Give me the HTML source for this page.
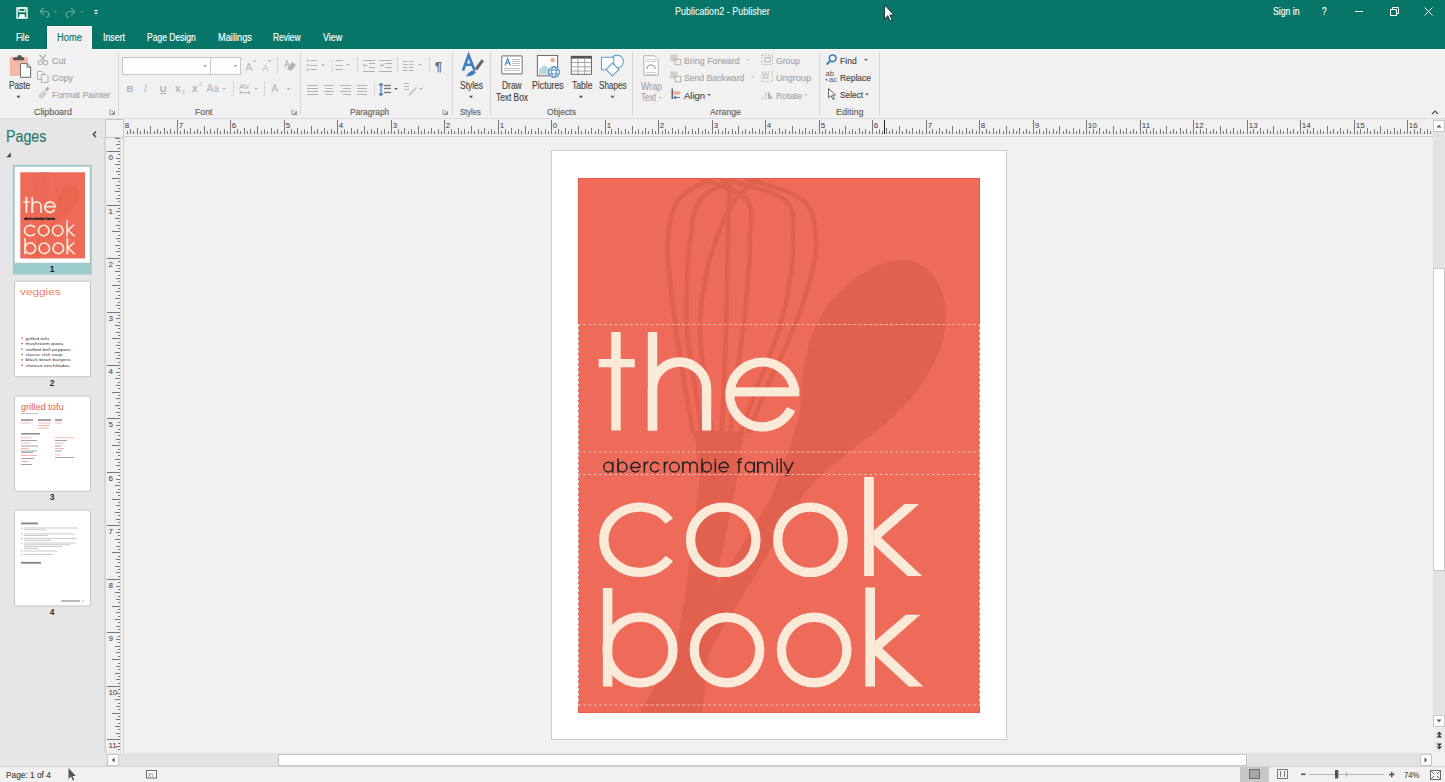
<!DOCTYPE html><html><head><meta charset="utf-8"><style>
html,body{margin:0;padding:0;}
body{width:1445px;height:782px;overflow:hidden;position:relative;background:#f0f0f0;font-family:"Liberation Sans",sans-serif;}
.t{position:absolute;white-space:nowrap;transform-origin:0 0;-webkit-text-stroke:0.15px currentColor;}
svg{position:absolute;overflow:visible;}
</style></head><body>
<div style="position:absolute;left:0px;top:0px;width:1445px;height:49px;background:#077568;"></div>
<div style="position:absolute;left:0px;top:49px;width:1445px;height:70px;background:#f1f1f1;"></div>
<div style="position:absolute;left:0px;top:49px;width:1445px;height:1px;background:#fff;"></div>
<div style="position:absolute;left:46px;top:25px;width:47px;height:24px;background:#066a5e;"></div>
<div style="position:absolute;left:47px;top:26px;width:45px;height:24px;background:#ffffff;"></div>
<div style="position:absolute;left:48px;top:27px;width:43px;height:23px;background:#f1f1f1;"></div>
<div style="position:absolute;left:0px;top:118px;width:1445px;height:1px;background:#d8dbe0;"></div>
<div style="position:absolute;left:0px;top:119px;width:105px;height:647px;background:#e6e6e6;"></div>
<div style="position:absolute;left:105px;top:119px;width:1328px;height:18px;background:#f0f0f0;"></div>
<div style="position:absolute;left:105px;top:137px;width:18px;height:616px;background:#f0f0f0;"></div>
<div style="position:absolute;left:123px;top:137px;width:1310px;height:616px;background:#f0f0f0;"></div>
<div style="position:absolute;left:1433px;top:119px;width:12px;height:647px;background:#e3e3e3;"></div>
<div style="position:absolute;left:105px;top:753px;width:1328px;height:13px;background:#e3e3e3;"></div>
<div style="position:absolute;left:0px;top:766px;width:1445px;height:16px;background:#f1f1f1;"></div>
<div style="position:absolute;left:0px;top:766px;width:1445px;height:1px;background:#d4d4d4;"></div>
<svg style="left:0px;top:0px;shape-rendering:crispEdges;" width="1445" height="782" viewBox="0 0 1445 782"><rect x="105.5" y="119.5" width="18" height="18" fill="#f1f1f1" stroke="#c6c6c6"/><line x1="123" y1="136.5" x2="1433" y2="136.5" stroke="#cdcdcd"/><line x1="123" y1="133.5" x2="1433" y2="133.5" stroke="#dedede"/><text x="124.8" y="127.9" font-size="8" fill="#3a3a3a" font-family="Liberation Sans">8</text><line x1="127.5" y1="131" x2="127.5" y2="133.5" stroke="#787878"/><line x1="130.5" y1="129" x2="130.5" y2="133.5" stroke="#787878"/><line x1="133.5" y1="131" x2="133.5" y2="133.5" stroke="#787878"/><line x1="137.5" y1="128" x2="137.5" y2="133.5" stroke="#787878"/><line x1="140.5" y1="131" x2="140.5" y2="133.5" stroke="#787878"/><line x1="144.5" y1="129" x2="144.5" y2="133.5" stroke="#787878"/><line x1="147.5" y1="131" x2="147.5" y2="133.5" stroke="#787878"/><line x1="150.5" y1="126" x2="150.5" y2="133.5" stroke="#787878"/><line x1="154.5" y1="131" x2="154.5" y2="133.5" stroke="#787878"/><line x1="157.5" y1="129" x2="157.5" y2="133.5" stroke="#787878"/><line x1="160.5" y1="131" x2="160.5" y2="133.5" stroke="#787878"/><line x1="164.5" y1="128" x2="164.5" y2="133.5" stroke="#787878"/><line x1="167.5" y1="131" x2="167.5" y2="133.5" stroke="#787878"/><line x1="170.5" y1="129" x2="170.5" y2="133.5" stroke="#787878"/><line x1="174.5" y1="131" x2="174.5" y2="133.5" stroke="#787878"/><line x1="177.5" y1="120" x2="177.5" y2="133.5" stroke="#787878"/><text x="178.8" y="127.9" font-size="8" fill="#3a3a3a" font-family="Liberation Sans">7</text><line x1="180.5" y1="131" x2="180.5" y2="133.5" stroke="#787878"/><line x1="184.5" y1="129" x2="184.5" y2="133.5" stroke="#787878"/><line x1="187.5" y1="131" x2="187.5" y2="133.5" stroke="#787878"/><line x1="190.5" y1="128" x2="190.5" y2="133.5" stroke="#787878"/><line x1="194.5" y1="131" x2="194.5" y2="133.5" stroke="#787878"/><line x1="197.5" y1="129" x2="197.5" y2="133.5" stroke="#787878"/><line x1="200.5" y1="131" x2="200.5" y2="133.5" stroke="#787878"/><line x1="204.5" y1="126" x2="204.5" y2="133.5" stroke="#787878"/><line x1="207.5" y1="131" x2="207.5" y2="133.5" stroke="#787878"/><line x1="210.5" y1="129" x2="210.5" y2="133.5" stroke="#787878"/><line x1="214.5" y1="131" x2="214.5" y2="133.5" stroke="#787878"/><line x1="217.5" y1="128" x2="217.5" y2="133.5" stroke="#787878"/><line x1="220.5" y1="131" x2="220.5" y2="133.5" stroke="#787878"/><line x1="224.5" y1="129" x2="224.5" y2="133.5" stroke="#787878"/><line x1="227.5" y1="131" x2="227.5" y2="133.5" stroke="#787878"/><line x1="230.5" y1="120" x2="230.5" y2="133.5" stroke="#787878"/><text x="231.8" y="127.9" font-size="8" fill="#3a3a3a" font-family="Liberation Sans">6</text><line x1="234.5" y1="131" x2="234.5" y2="133.5" stroke="#787878"/><line x1="237.5" y1="129" x2="237.5" y2="133.5" stroke="#787878"/><line x1="240.5" y1="131" x2="240.5" y2="133.5" stroke="#787878"/><line x1="244.5" y1="128" x2="244.5" y2="133.5" stroke="#787878"/><line x1="247.5" y1="131" x2="247.5" y2="133.5" stroke="#787878"/><line x1="250.5" y1="129" x2="250.5" y2="133.5" stroke="#787878"/><line x1="254.5" y1="131" x2="254.5" y2="133.5" stroke="#787878"/><line x1="257.5" y1="126" x2="257.5" y2="133.5" stroke="#787878"/><line x1="261.5" y1="131" x2="261.5" y2="133.5" stroke="#787878"/><line x1="264.5" y1="129" x2="264.5" y2="133.5" stroke="#787878"/><line x1="267.5" y1="131" x2="267.5" y2="133.5" stroke="#787878"/><line x1="271.5" y1="128" x2="271.5" y2="133.5" stroke="#787878"/><line x1="274.5" y1="131" x2="274.5" y2="133.5" stroke="#787878"/><line x1="277.5" y1="129" x2="277.5" y2="133.5" stroke="#787878"/><line x1="281.5" y1="131" x2="281.5" y2="133.5" stroke="#787878"/><line x1="284.5" y1="120" x2="284.5" y2="133.5" stroke="#787878"/><text x="285.8" y="127.9" font-size="8" fill="#3a3a3a" font-family="Liberation Sans">5</text><line x1="287.5" y1="131" x2="287.5" y2="133.5" stroke="#787878"/><line x1="291.5" y1="129" x2="291.5" y2="133.5" stroke="#787878"/><line x1="294.5" y1="131" x2="294.5" y2="133.5" stroke="#787878"/><line x1="297.5" y1="128" x2="297.5" y2="133.5" stroke="#787878"/><line x1="301.5" y1="131" x2="301.5" y2="133.5" stroke="#787878"/><line x1="304.5" y1="129" x2="304.5" y2="133.5" stroke="#787878"/><line x1="307.5" y1="131" x2="307.5" y2="133.5" stroke="#787878"/><line x1="311.5" y1="126" x2="311.5" y2="133.5" stroke="#787878"/><line x1="314.5" y1="131" x2="314.5" y2="133.5" stroke="#787878"/><line x1="317.5" y1="129" x2="317.5" y2="133.5" stroke="#787878"/><line x1="321.5" y1="131" x2="321.5" y2="133.5" stroke="#787878"/><line x1="324.5" y1="128" x2="324.5" y2="133.5" stroke="#787878"/><line x1="327.5" y1="131" x2="327.5" y2="133.5" stroke="#787878"/><line x1="331.5" y1="129" x2="331.5" y2="133.5" stroke="#787878"/><line x1="334.5" y1="131" x2="334.5" y2="133.5" stroke="#787878"/><line x1="337.5" y1="120" x2="337.5" y2="133.5" stroke="#787878"/><text x="338.8" y="127.9" font-size="8" fill="#3a3a3a" font-family="Liberation Sans">4</text><line x1="341.5" y1="131" x2="341.5" y2="133.5" stroke="#787878"/><line x1="344.5" y1="129" x2="344.5" y2="133.5" stroke="#787878"/><line x1="347.5" y1="131" x2="347.5" y2="133.5" stroke="#787878"/><line x1="351.5" y1="128" x2="351.5" y2="133.5" stroke="#787878"/><line x1="354.5" y1="131" x2="354.5" y2="133.5" stroke="#787878"/><line x1="357.5" y1="129" x2="357.5" y2="133.5" stroke="#787878"/><line x1="361.5" y1="131" x2="361.5" y2="133.5" stroke="#787878"/><line x1="364.5" y1="126" x2="364.5" y2="133.5" stroke="#787878"/><line x1="367.5" y1="131" x2="367.5" y2="133.5" stroke="#787878"/><line x1="371.5" y1="129" x2="371.5" y2="133.5" stroke="#787878"/><line x1="374.5" y1="131" x2="374.5" y2="133.5" stroke="#787878"/><line x1="377.5" y1="128" x2="377.5" y2="133.5" stroke="#787878"/><line x1="381.5" y1="131" x2="381.5" y2="133.5" stroke="#787878"/><line x1="384.5" y1="129" x2="384.5" y2="133.5" stroke="#787878"/><line x1="388.5" y1="131" x2="388.5" y2="133.5" stroke="#787878"/><line x1="391.5" y1="120" x2="391.5" y2="133.5" stroke="#787878"/><text x="392.8" y="127.9" font-size="8" fill="#3a3a3a" font-family="Liberation Sans">3</text><line x1="394.5" y1="131" x2="394.5" y2="133.5" stroke="#787878"/><line x1="398.5" y1="129" x2="398.5" y2="133.5" stroke="#787878"/><line x1="401.5" y1="131" x2="401.5" y2="133.5" stroke="#787878"/><line x1="404.5" y1="128" x2="404.5" y2="133.5" stroke="#787878"/><line x1="408.5" y1="131" x2="408.5" y2="133.5" stroke="#787878"/><line x1="411.5" y1="129" x2="411.5" y2="133.5" stroke="#787878"/><line x1="414.5" y1="131" x2="414.5" y2="133.5" stroke="#787878"/><line x1="418.5" y1="126" x2="418.5" y2="133.5" stroke="#787878"/><line x1="421.5" y1="131" x2="421.5" y2="133.5" stroke="#787878"/><line x1="424.5" y1="129" x2="424.5" y2="133.5" stroke="#787878"/><line x1="428.5" y1="131" x2="428.5" y2="133.5" stroke="#787878"/><line x1="431.5" y1="128" x2="431.5" y2="133.5" stroke="#787878"/><line x1="434.5" y1="131" x2="434.5" y2="133.5" stroke="#787878"/><line x1="438.5" y1="129" x2="438.5" y2="133.5" stroke="#787878"/><line x1="441.5" y1="131" x2="441.5" y2="133.5" stroke="#787878"/><line x1="444.5" y1="120" x2="444.5" y2="133.5" stroke="#787878"/><text x="445.8" y="127.9" font-size="8" fill="#3a3a3a" font-family="Liberation Sans">2</text><line x1="448.5" y1="131" x2="448.5" y2="133.5" stroke="#787878"/><line x1="451.5" y1="129" x2="451.5" y2="133.5" stroke="#787878"/><line x1="454.5" y1="131" x2="454.5" y2="133.5" stroke="#787878"/><line x1="458.5" y1="128" x2="458.5" y2="133.5" stroke="#787878"/><line x1="461.5" y1="131" x2="461.5" y2="133.5" stroke="#787878"/><line x1="464.5" y1="129" x2="464.5" y2="133.5" stroke="#787878"/><line x1="468.5" y1="131" x2="468.5" y2="133.5" stroke="#787878"/><line x1="471.5" y1="126" x2="471.5" y2="133.5" stroke="#787878"/><line x1="474.5" y1="131" x2="474.5" y2="133.5" stroke="#787878"/><line x1="478.5" y1="129" x2="478.5" y2="133.5" stroke="#787878"/><line x1="481.5" y1="131" x2="481.5" y2="133.5" stroke="#787878"/><line x1="484.5" y1="128" x2="484.5" y2="133.5" stroke="#787878"/><line x1="488.5" y1="131" x2="488.5" y2="133.5" stroke="#787878"/><line x1="491.5" y1="129" x2="491.5" y2="133.5" stroke="#787878"/><line x1="494.5" y1="131" x2="494.5" y2="133.5" stroke="#787878"/><line x1="498.5" y1="120" x2="498.5" y2="133.5" stroke="#787878"/><text x="499.8" y="127.9" font-size="8" fill="#3a3a3a" font-family="Liberation Sans">1</text><line x1="501.5" y1="131" x2="501.5" y2="133.5" stroke="#787878"/><line x1="505.5" y1="129" x2="505.5" y2="133.5" stroke="#787878"/><line x1="508.5" y1="131" x2="508.5" y2="133.5" stroke="#787878"/><line x1="511.5" y1="128" x2="511.5" y2="133.5" stroke="#787878"/><line x1="515.5" y1="131" x2="515.5" y2="133.5" stroke="#787878"/><line x1="518.5" y1="129" x2="518.5" y2="133.5" stroke="#787878"/><line x1="521.5" y1="131" x2="521.5" y2="133.5" stroke="#787878"/><line x1="525.5" y1="126" x2="525.5" y2="133.5" stroke="#787878"/><line x1="528.5" y1="131" x2="528.5" y2="133.5" stroke="#787878"/><line x1="531.5" y1="129" x2="531.5" y2="133.5" stroke="#787878"/><line x1="535.5" y1="131" x2="535.5" y2="133.5" stroke="#787878"/><line x1="538.5" y1="128" x2="538.5" y2="133.5" stroke="#787878"/><line x1="541.5" y1="131" x2="541.5" y2="133.5" stroke="#787878"/><line x1="545.5" y1="129" x2="545.5" y2="133.5" stroke="#787878"/><line x1="548.5" y1="131" x2="548.5" y2="133.5" stroke="#787878"/><line x1="551.5" y1="120" x2="551.5" y2="133.5" stroke="#787878"/><text x="552.8" y="127.9" font-size="8" fill="#3a3a3a" font-family="Liberation Sans">0</text><line x1="555.5" y1="131" x2="555.5" y2="133.5" stroke="#787878"/><line x1="558.5" y1="129" x2="558.5" y2="133.5" stroke="#787878"/><line x1="561.5" y1="131" x2="561.5" y2="133.5" stroke="#787878"/><line x1="565.5" y1="128" x2="565.5" y2="133.5" stroke="#787878"/><line x1="568.5" y1="131" x2="568.5" y2="133.5" stroke="#787878"/><line x1="571.5" y1="129" x2="571.5" y2="133.5" stroke="#787878"/><line x1="575.5" y1="131" x2="575.5" y2="133.5" stroke="#787878"/><line x1="578.5" y1="126" x2="578.5" y2="133.5" stroke="#787878"/><line x1="581.5" y1="131" x2="581.5" y2="133.5" stroke="#787878"/><line x1="585.5" y1="129" x2="585.5" y2="133.5" stroke="#787878"/><line x1="588.5" y1="131" x2="588.5" y2="133.5" stroke="#787878"/><line x1="591.5" y1="128" x2="591.5" y2="133.5" stroke="#787878"/><line x1="595.5" y1="131" x2="595.5" y2="133.5" stroke="#787878"/><line x1="598.5" y1="129" x2="598.5" y2="133.5" stroke="#787878"/><line x1="601.5" y1="131" x2="601.5" y2="133.5" stroke="#787878"/><line x1="605.5" y1="120" x2="605.5" y2="133.5" stroke="#787878"/><text x="606.8" y="127.9" font-size="8" fill="#3a3a3a" font-family="Liberation Sans">1</text><line x1="608.5" y1="131" x2="608.5" y2="133.5" stroke="#787878"/><line x1="611.5" y1="129" x2="611.5" y2="133.5" stroke="#787878"/><line x1="615.5" y1="131" x2="615.5" y2="133.5" stroke="#787878"/><line x1="618.5" y1="128" x2="618.5" y2="133.5" stroke="#787878"/><line x1="621.5" y1="131" x2="621.5" y2="133.5" stroke="#787878"/><line x1="625.5" y1="129" x2="625.5" y2="133.5" stroke="#787878"/><line x1="628.5" y1="131" x2="628.5" y2="133.5" stroke="#787878"/><line x1="632.5" y1="126" x2="632.5" y2="133.5" stroke="#787878"/><line x1="635.5" y1="131" x2="635.5" y2="133.5" stroke="#787878"/><line x1="638.5" y1="129" x2="638.5" y2="133.5" stroke="#787878"/><line x1="642.5" y1="131" x2="642.5" y2="133.5" stroke="#787878"/><line x1="645.5" y1="128" x2="645.5" y2="133.5" stroke="#787878"/><line x1="648.5" y1="131" x2="648.5" y2="133.5" stroke="#787878"/><line x1="652.5" y1="129" x2="652.5" y2="133.5" stroke="#787878"/><line x1="655.5" y1="131" x2="655.5" y2="133.5" stroke="#787878"/><line x1="658.5" y1="120" x2="658.5" y2="133.5" stroke="#787878"/><text x="659.8" y="127.9" font-size="8" fill="#3a3a3a" font-family="Liberation Sans">2</text><line x1="662.5" y1="131" x2="662.5" y2="133.5" stroke="#787878"/><line x1="665.5" y1="129" x2="665.5" y2="133.5" stroke="#787878"/><line x1="668.5" y1="131" x2="668.5" y2="133.5" stroke="#787878"/><line x1="672.5" y1="128" x2="672.5" y2="133.5" stroke="#787878"/><line x1="675.5" y1="131" x2="675.5" y2="133.5" stroke="#787878"/><line x1="678.5" y1="129" x2="678.5" y2="133.5" stroke="#787878"/><line x1="682.5" y1="131" x2="682.5" y2="133.5" stroke="#787878"/><line x1="685.5" y1="126" x2="685.5" y2="133.5" stroke="#787878"/><line x1="688.5" y1="131" x2="688.5" y2="133.5" stroke="#787878"/><line x1="692.5" y1="129" x2="692.5" y2="133.5" stroke="#787878"/><line x1="695.5" y1="131" x2="695.5" y2="133.5" stroke="#787878"/><line x1="698.5" y1="128" x2="698.5" y2="133.5" stroke="#787878"/><line x1="702.5" y1="131" x2="702.5" y2="133.5" stroke="#787878"/><line x1="705.5" y1="129" x2="705.5" y2="133.5" stroke="#787878"/><line x1="708.5" y1="131" x2="708.5" y2="133.5" stroke="#787878"/><line x1="712.5" y1="120" x2="712.5" y2="133.5" stroke="#787878"/><text x="713.8" y="127.9" font-size="8" fill="#3a3a3a" font-family="Liberation Sans">3</text><line x1="715.5" y1="131" x2="715.5" y2="133.5" stroke="#787878"/><line x1="718.5" y1="129" x2="718.5" y2="133.5" stroke="#787878"/><line x1="722.5" y1="131" x2="722.5" y2="133.5" stroke="#787878"/><line x1="725.5" y1="128" x2="725.5" y2="133.5" stroke="#787878"/><line x1="728.5" y1="131" x2="728.5" y2="133.5" stroke="#787878"/><line x1="732.5" y1="129" x2="732.5" y2="133.5" stroke="#787878"/><line x1="735.5" y1="131" x2="735.5" y2="133.5" stroke="#787878"/><line x1="738.5" y1="126" x2="738.5" y2="133.5" stroke="#787878"/><line x1="742.5" y1="131" x2="742.5" y2="133.5" stroke="#787878"/><line x1="745.5" y1="129" x2="745.5" y2="133.5" stroke="#787878"/><line x1="749.5" y1="131" x2="749.5" y2="133.5" stroke="#787878"/><line x1="752.5" y1="128" x2="752.5" y2="133.5" stroke="#787878"/><line x1="755.5" y1="131" x2="755.5" y2="133.5" stroke="#787878"/><line x1="759.5" y1="129" x2="759.5" y2="133.5" stroke="#787878"/><line x1="762.5" y1="131" x2="762.5" y2="133.5" stroke="#787878"/><line x1="765.5" y1="120" x2="765.5" y2="133.5" stroke="#787878"/><text x="766.8" y="127.9" font-size="8" fill="#3a3a3a" font-family="Liberation Sans">4</text><line x1="769.5" y1="131" x2="769.5" y2="133.5" stroke="#787878"/><line x1="772.5" y1="129" x2="772.5" y2="133.5" stroke="#787878"/><line x1="775.5" y1="131" x2="775.5" y2="133.5" stroke="#787878"/><line x1="779.5" y1="128" x2="779.5" y2="133.5" stroke="#787878"/><line x1="782.5" y1="131" x2="782.5" y2="133.5" stroke="#787878"/><line x1="785.5" y1="129" x2="785.5" y2="133.5" stroke="#787878"/><line x1="789.5" y1="131" x2="789.5" y2="133.5" stroke="#787878"/><line x1="792.5" y1="126" x2="792.5" y2="133.5" stroke="#787878"/><line x1="795.5" y1="131" x2="795.5" y2="133.5" stroke="#787878"/><line x1="799.5" y1="129" x2="799.5" y2="133.5" stroke="#787878"/><line x1="802.5" y1="131" x2="802.5" y2="133.5" stroke="#787878"/><line x1="805.5" y1="128" x2="805.5" y2="133.5" stroke="#787878"/><line x1="809.5" y1="131" x2="809.5" y2="133.5" stroke="#787878"/><line x1="812.5" y1="129" x2="812.5" y2="133.5" stroke="#787878"/><line x1="815.5" y1="131" x2="815.5" y2="133.5" stroke="#787878"/><line x1="819.5" y1="120" x2="819.5" y2="133.5" stroke="#787878"/><text x="820.8" y="127.9" font-size="8" fill="#3a3a3a" font-family="Liberation Sans">5</text><line x1="822.5" y1="131" x2="822.5" y2="133.5" stroke="#787878"/><line x1="825.5" y1="129" x2="825.5" y2="133.5" stroke="#787878"/><line x1="829.5" y1="131" x2="829.5" y2="133.5" stroke="#787878"/><line x1="832.5" y1="128" x2="832.5" y2="133.5" stroke="#787878"/><line x1="835.5" y1="131" x2="835.5" y2="133.5" stroke="#787878"/><line x1="839.5" y1="129" x2="839.5" y2="133.5" stroke="#787878"/><line x1="842.5" y1="131" x2="842.5" y2="133.5" stroke="#787878"/><line x1="845.5" y1="126" x2="845.5" y2="133.5" stroke="#787878"/><line x1="849.5" y1="131" x2="849.5" y2="133.5" stroke="#787878"/><line x1="852.5" y1="129" x2="852.5" y2="133.5" stroke="#787878"/><line x1="855.5" y1="131" x2="855.5" y2="133.5" stroke="#787878"/><line x1="859.5" y1="128" x2="859.5" y2="133.5" stroke="#787878"/><line x1="862.5" y1="131" x2="862.5" y2="133.5" stroke="#787878"/><line x1="865.5" y1="129" x2="865.5" y2="133.5" stroke="#787878"/><line x1="869.5" y1="131" x2="869.5" y2="133.5" stroke="#787878"/><line x1="872.5" y1="120" x2="872.5" y2="133.5" stroke="#787878"/><text x="873.8" y="127.9" font-size="8" fill="#3a3a3a" font-family="Liberation Sans">6</text><line x1="876.5" y1="131" x2="876.5" y2="133.5" stroke="#787878"/><line x1="879.5" y1="129" x2="879.5" y2="133.5" stroke="#787878"/><line x1="882.5" y1="131" x2="882.5" y2="133.5" stroke="#787878"/><line x1="886.5" y1="128" x2="886.5" y2="133.5" stroke="#787878"/><line x1="889.5" y1="131" x2="889.5" y2="133.5" stroke="#787878"/><line x1="892.5" y1="129" x2="892.5" y2="133.5" stroke="#787878"/><line x1="896.5" y1="131" x2="896.5" y2="133.5" stroke="#787878"/><line x1="899.5" y1="126" x2="899.5" y2="133.5" stroke="#787878"/><line x1="902.5" y1="131" x2="902.5" y2="133.5" stroke="#787878"/><line x1="906.5" y1="129" x2="906.5" y2="133.5" stroke="#787878"/><line x1="909.5" y1="131" x2="909.5" y2="133.5" stroke="#787878"/><line x1="912.5" y1="128" x2="912.5" y2="133.5" stroke="#787878"/><line x1="916.5" y1="131" x2="916.5" y2="133.5" stroke="#787878"/><line x1="919.5" y1="129" x2="919.5" y2="133.5" stroke="#787878"/><line x1="922.5" y1="131" x2="922.5" y2="133.5" stroke="#787878"/><line x1="926.5" y1="120" x2="926.5" y2="133.5" stroke="#787878"/><text x="927.8" y="127.9" font-size="8" fill="#3a3a3a" font-family="Liberation Sans">7</text><line x1="929.5" y1="131" x2="929.5" y2="133.5" stroke="#787878"/><line x1="932.5" y1="129" x2="932.5" y2="133.5" stroke="#787878"/><line x1="936.5" y1="131" x2="936.5" y2="133.5" stroke="#787878"/><line x1="939.5" y1="128" x2="939.5" y2="133.5" stroke="#787878"/><line x1="942.5" y1="131" x2="942.5" y2="133.5" stroke="#787878"/><line x1="946.5" y1="129" x2="946.5" y2="133.5" stroke="#787878"/><line x1="949.5" y1="131" x2="949.5" y2="133.5" stroke="#787878"/><line x1="952.5" y1="126" x2="952.5" y2="133.5" stroke="#787878"/><line x1="956.5" y1="131" x2="956.5" y2="133.5" stroke="#787878"/><line x1="959.5" y1="129" x2="959.5" y2="133.5" stroke="#787878"/><line x1="962.5" y1="131" x2="962.5" y2="133.5" stroke="#787878"/><line x1="966.5" y1="128" x2="966.5" y2="133.5" stroke="#787878"/><line x1="969.5" y1="131" x2="969.5" y2="133.5" stroke="#787878"/><line x1="972.5" y1="129" x2="972.5" y2="133.5" stroke="#787878"/><line x1="976.5" y1="131" x2="976.5" y2="133.5" stroke="#787878"/><line x1="979.5" y1="120" x2="979.5" y2="133.5" stroke="#787878"/><text x="980.8" y="127.9" font-size="8" fill="#3a3a3a" font-family="Liberation Sans">8</text><line x1="982.5" y1="131" x2="982.5" y2="133.5" stroke="#787878"/><line x1="986.5" y1="129" x2="986.5" y2="133.5" stroke="#787878"/><line x1="989.5" y1="131" x2="989.5" y2="133.5" stroke="#787878"/><line x1="993.5" y1="128" x2="993.5" y2="133.5" stroke="#787878"/><line x1="996.5" y1="131" x2="996.5" y2="133.5" stroke="#787878"/><line x1="999.5" y1="129" x2="999.5" y2="133.5" stroke="#787878"/><line x1="1003.5" y1="131" x2="1003.5" y2="133.5" stroke="#787878"/><line x1="1006.5" y1="126" x2="1006.5" y2="133.5" stroke="#787878"/><line x1="1009.5" y1="131" x2="1009.5" y2="133.5" stroke="#787878"/><line x1="1013.5" y1="129" x2="1013.5" y2="133.5" stroke="#787878"/><line x1="1016.5" y1="131" x2="1016.5" y2="133.5" stroke="#787878"/><line x1="1019.5" y1="128" x2="1019.5" y2="133.5" stroke="#787878"/><line x1="1023.5" y1="131" x2="1023.5" y2="133.5" stroke="#787878"/><line x1="1026.5" y1="129" x2="1026.5" y2="133.5" stroke="#787878"/><line x1="1029.5" y1="131" x2="1029.5" y2="133.5" stroke="#787878"/><line x1="1033.5" y1="120" x2="1033.5" y2="133.5" stroke="#787878"/><text x="1034.8" y="127.9" font-size="8" fill="#3a3a3a" font-family="Liberation Sans">9</text><line x1="1036.5" y1="131" x2="1036.5" y2="133.5" stroke="#787878"/><line x1="1039.5" y1="129" x2="1039.5" y2="133.5" stroke="#787878"/><line x1="1043.5" y1="131" x2="1043.5" y2="133.5" stroke="#787878"/><line x1="1046.5" y1="128" x2="1046.5" y2="133.5" stroke="#787878"/><line x1="1049.5" y1="131" x2="1049.5" y2="133.5" stroke="#787878"/><line x1="1053.5" y1="129" x2="1053.5" y2="133.5" stroke="#787878"/><line x1="1056.5" y1="131" x2="1056.5" y2="133.5" stroke="#787878"/><line x1="1059.5" y1="126" x2="1059.5" y2="133.5" stroke="#787878"/><line x1="1063.5" y1="131" x2="1063.5" y2="133.5" stroke="#787878"/><line x1="1066.5" y1="129" x2="1066.5" y2="133.5" stroke="#787878"/><line x1="1069.5" y1="131" x2="1069.5" y2="133.5" stroke="#787878"/><line x1="1073.5" y1="128" x2="1073.5" y2="133.5" stroke="#787878"/><line x1="1076.5" y1="131" x2="1076.5" y2="133.5" stroke="#787878"/><line x1="1079.5" y1="129" x2="1079.5" y2="133.5" stroke="#787878"/><line x1="1083.5" y1="131" x2="1083.5" y2="133.5" stroke="#787878"/><line x1="1086.5" y1="120" x2="1086.5" y2="133.5" stroke="#787878"/><text x="1087.8" y="127.9" font-size="8" fill="#3a3a3a" font-family="Liberation Sans">10</text><line x1="1089.5" y1="131" x2="1089.5" y2="133.5" stroke="#787878"/><line x1="1093.5" y1="129" x2="1093.5" y2="133.5" stroke="#787878"/><line x1="1096.5" y1="131" x2="1096.5" y2="133.5" stroke="#787878"/><line x1="1099.5" y1="128" x2="1099.5" y2="133.5" stroke="#787878"/><line x1="1103.5" y1="131" x2="1103.5" y2="133.5" stroke="#787878"/><line x1="1106.5" y1="129" x2="1106.5" y2="133.5" stroke="#787878"/><line x1="1109.5" y1="131" x2="1109.5" y2="133.5" stroke="#787878"/><line x1="1113.5" y1="126" x2="1113.5" y2="133.5" stroke="#787878"/><line x1="1116.5" y1="131" x2="1116.5" y2="133.5" stroke="#787878"/><line x1="1120.5" y1="129" x2="1120.5" y2="133.5" stroke="#787878"/><line x1="1123.5" y1="131" x2="1123.5" y2="133.5" stroke="#787878"/><line x1="1126.5" y1="128" x2="1126.5" y2="133.5" stroke="#787878"/><line x1="1130.5" y1="131" x2="1130.5" y2="133.5" stroke="#787878"/><line x1="1133.5" y1="129" x2="1133.5" y2="133.5" stroke="#787878"/><line x1="1136.5" y1="131" x2="1136.5" y2="133.5" stroke="#787878"/><line x1="1140.5" y1="120" x2="1140.5" y2="133.5" stroke="#787878"/><text x="1141.8" y="127.9" font-size="8" fill="#3a3a3a" font-family="Liberation Sans">11</text><line x1="1143.5" y1="131" x2="1143.5" y2="133.5" stroke="#787878"/><line x1="1146.5" y1="129" x2="1146.5" y2="133.5" stroke="#787878"/><line x1="1150.5" y1="131" x2="1150.5" y2="133.5" stroke="#787878"/><line x1="1153.5" y1="128" x2="1153.5" y2="133.5" stroke="#787878"/><line x1="1156.5" y1="131" x2="1156.5" y2="133.5" stroke="#787878"/><line x1="1160.5" y1="129" x2="1160.5" y2="133.5" stroke="#787878"/><line x1="1163.5" y1="131" x2="1163.5" y2="133.5" stroke="#787878"/><line x1="1166.5" y1="126" x2="1166.5" y2="133.5" stroke="#787878"/><line x1="1170.5" y1="131" x2="1170.5" y2="133.5" stroke="#787878"/><line x1="1173.5" y1="129" x2="1173.5" y2="133.5" stroke="#787878"/><line x1="1176.5" y1="131" x2="1176.5" y2="133.5" stroke="#787878"/><line x1="1180.5" y1="128" x2="1180.5" y2="133.5" stroke="#787878"/><line x1="1183.5" y1="131" x2="1183.5" y2="133.5" stroke="#787878"/><line x1="1186.5" y1="129" x2="1186.5" y2="133.5" stroke="#787878"/><line x1="1190.5" y1="131" x2="1190.5" y2="133.5" stroke="#787878"/><line x1="1193.5" y1="120" x2="1193.5" y2="133.5" stroke="#787878"/><text x="1194.8" y="127.9" font-size="8" fill="#3a3a3a" font-family="Liberation Sans">12</text><line x1="1196.5" y1="131" x2="1196.5" y2="133.5" stroke="#787878"/><line x1="1200.5" y1="129" x2="1200.5" y2="133.5" stroke="#787878"/><line x1="1203.5" y1="131" x2="1203.5" y2="133.5" stroke="#787878"/><line x1="1206.5" y1="128" x2="1206.5" y2="133.5" stroke="#787878"/><line x1="1210.5" y1="131" x2="1210.5" y2="133.5" stroke="#787878"/><line x1="1213.5" y1="129" x2="1213.5" y2="133.5" stroke="#787878"/><line x1="1216.5" y1="131" x2="1216.5" y2="133.5" stroke="#787878"/><line x1="1220.5" y1="126" x2="1220.5" y2="133.5" stroke="#787878"/><line x1="1223.5" y1="131" x2="1223.5" y2="133.5" stroke="#787878"/><line x1="1226.5" y1="129" x2="1226.5" y2="133.5" stroke="#787878"/><line x1="1230.5" y1="131" x2="1230.5" y2="133.5" stroke="#787878"/><line x1="1233.5" y1="128" x2="1233.5" y2="133.5" stroke="#787878"/><line x1="1237.5" y1="131" x2="1237.5" y2="133.5" stroke="#787878"/><line x1="1240.5" y1="129" x2="1240.5" y2="133.5" stroke="#787878"/><line x1="1243.5" y1="131" x2="1243.5" y2="133.5" stroke="#787878"/><line x1="1247.5" y1="120" x2="1247.5" y2="133.5" stroke="#787878"/><text x="1248.8" y="127.9" font-size="8" fill="#3a3a3a" font-family="Liberation Sans">13</text><line x1="1250.5" y1="131" x2="1250.5" y2="133.5" stroke="#787878"/><line x1="1253.5" y1="129" x2="1253.5" y2="133.5" stroke="#787878"/><line x1="1257.5" y1="131" x2="1257.5" y2="133.5" stroke="#787878"/><line x1="1260.5" y1="128" x2="1260.5" y2="133.5" stroke="#787878"/><line x1="1263.5" y1="131" x2="1263.5" y2="133.5" stroke="#787878"/><line x1="1267.5" y1="129" x2="1267.5" y2="133.5" stroke="#787878"/><line x1="1270.5" y1="131" x2="1270.5" y2="133.5" stroke="#787878"/><line x1="1273.5" y1="126" x2="1273.5" y2="133.5" stroke="#787878"/><line x1="1277.5" y1="131" x2="1277.5" y2="133.5" stroke="#787878"/><line x1="1280.5" y1="129" x2="1280.5" y2="133.5" stroke="#787878"/><line x1="1283.5" y1="131" x2="1283.5" y2="133.5" stroke="#787878"/><line x1="1287.5" y1="128" x2="1287.5" y2="133.5" stroke="#787878"/><line x1="1290.5" y1="131" x2="1290.5" y2="133.5" stroke="#787878"/><line x1="1293.5" y1="129" x2="1293.5" y2="133.5" stroke="#787878"/><line x1="1297.5" y1="131" x2="1297.5" y2="133.5" stroke="#787878"/><line x1="1300.5" y1="120" x2="1300.5" y2="133.5" stroke="#787878"/><text x="1301.8" y="127.9" font-size="8" fill="#3a3a3a" font-family="Liberation Sans">14</text><line x1="1303.5" y1="131" x2="1303.5" y2="133.5" stroke="#787878"/><line x1="1307.5" y1="129" x2="1307.5" y2="133.5" stroke="#787878"/><line x1="1310.5" y1="131" x2="1310.5" y2="133.5" stroke="#787878"/><line x1="1313.5" y1="128" x2="1313.5" y2="133.5" stroke="#787878"/><line x1="1317.5" y1="131" x2="1317.5" y2="133.5" stroke="#787878"/><line x1="1320.5" y1="129" x2="1320.5" y2="133.5" stroke="#787878"/><line x1="1323.5" y1="131" x2="1323.5" y2="133.5" stroke="#787878"/><line x1="1327.5" y1="126" x2="1327.5" y2="133.5" stroke="#787878"/><line x1="1330.5" y1="131" x2="1330.5" y2="133.5" stroke="#787878"/><line x1="1333.5" y1="129" x2="1333.5" y2="133.5" stroke="#787878"/><line x1="1337.5" y1="131" x2="1337.5" y2="133.5" stroke="#787878"/><line x1="1340.5" y1="128" x2="1340.5" y2="133.5" stroke="#787878"/><line x1="1343.5" y1="131" x2="1343.5" y2="133.5" stroke="#787878"/><line x1="1347.5" y1="129" x2="1347.5" y2="133.5" stroke="#787878"/><line x1="1350.5" y1="131" x2="1350.5" y2="133.5" stroke="#787878"/><line x1="1354.5" y1="120" x2="1354.5" y2="133.5" stroke="#787878"/><text x="1355.8" y="127.9" font-size="8" fill="#3a3a3a" font-family="Liberation Sans">15</text><line x1="1357.5" y1="131" x2="1357.5" y2="133.5" stroke="#787878"/><line x1="1360.5" y1="129" x2="1360.5" y2="133.5" stroke="#787878"/><line x1="1364.5" y1="131" x2="1364.5" y2="133.5" stroke="#787878"/><line x1="1367.5" y1="128" x2="1367.5" y2="133.5" stroke="#787878"/><line x1="1370.5" y1="131" x2="1370.5" y2="133.5" stroke="#787878"/><line x1="1374.5" y1="129" x2="1374.5" y2="133.5" stroke="#787878"/><line x1="1377.5" y1="131" x2="1377.5" y2="133.5" stroke="#787878"/><line x1="1380.5" y1="126" x2="1380.5" y2="133.5" stroke="#787878"/><line x1="1384.5" y1="131" x2="1384.5" y2="133.5" stroke="#787878"/><line x1="1387.5" y1="129" x2="1387.5" y2="133.5" stroke="#787878"/><line x1="1390.5" y1="131" x2="1390.5" y2="133.5" stroke="#787878"/><line x1="1394.5" y1="128" x2="1394.5" y2="133.5" stroke="#787878"/><line x1="1397.5" y1="131" x2="1397.5" y2="133.5" stroke="#787878"/><line x1="1400.5" y1="129" x2="1400.5" y2="133.5" stroke="#787878"/><line x1="1404.5" y1="131" x2="1404.5" y2="133.5" stroke="#787878"/><line x1="1407.5" y1="120" x2="1407.5" y2="133.5" stroke="#787878"/><text x="1408.8" y="127.9" font-size="8" fill="#3a3a3a" font-family="Liberation Sans">16</text><line x1="1410.5" y1="131" x2="1410.5" y2="133.5" stroke="#787878"/><line x1="1414.5" y1="129" x2="1414.5" y2="133.5" stroke="#787878"/><line x1="1417.5" y1="131" x2="1417.5" y2="133.5" stroke="#787878"/><line x1="1420.5" y1="128" x2="1420.5" y2="133.5" stroke="#787878"/><line x1="1424.5" y1="131" x2="1424.5" y2="133.5" stroke="#787878"/><line x1="1427.5" y1="129" x2="1427.5" y2="133.5" stroke="#787878"/><line x1="1430.5" y1="131" x2="1430.5" y2="133.5" stroke="#787878"/><rect x="104" y="137" width="2" height="616" fill="#d6d6d6"/><line x1="123.5" y1="137" x2="123.5" y2="753" stroke="#d2d2d2"/><line x1="120.5" y1="137" x2="120.5" y2="753" stroke="#dedede"/><line x1="114.5" y1="138.5" x2="120" y2="138.5" stroke="#787878"/><line x1="117.5" y1="141.5" x2="120" y2="141.5" stroke="#787878"/><line x1="116" y1="144.5" x2="120" y2="144.5" stroke="#787878"/><line x1="117.5" y1="148.5" x2="120" y2="148.5" stroke="#787878"/><line x1="107" y1="151.5" x2="120" y2="151.5" stroke="#787878"/><text x="108.4" y="159.8" font-size="8" fill="#3a3a3a" font-family="Liberation Sans">0</text><line x1="117.5" y1="154.5" x2="120" y2="154.5" stroke="#787878"/><line x1="116" y1="158.5" x2="120" y2="158.5" stroke="#787878"/><line x1="117.5" y1="161.5" x2="120" y2="161.5" stroke="#787878"/><line x1="114.5" y1="164.5" x2="120" y2="164.5" stroke="#787878"/><line x1="117.5" y1="168.5" x2="120" y2="168.5" stroke="#787878"/><line x1="116" y1="171.5" x2="120" y2="171.5" stroke="#787878"/><line x1="117.5" y1="174.5" x2="120" y2="174.5" stroke="#787878"/><line x1="112" y1="178.5" x2="120" y2="178.5" stroke="#787878"/><line x1="117.5" y1="181.5" x2="120" y2="181.5" stroke="#787878"/><line x1="116" y1="185.5" x2="120" y2="185.5" stroke="#787878"/><line x1="117.5" y1="188.5" x2="120" y2="188.5" stroke="#787878"/><line x1="114.5" y1="191.5" x2="120" y2="191.5" stroke="#787878"/><line x1="117.5" y1="195.5" x2="120" y2="195.5" stroke="#787878"/><line x1="116" y1="198.5" x2="120" y2="198.5" stroke="#787878"/><line x1="117.5" y1="201.5" x2="120" y2="201.5" stroke="#787878"/><line x1="107" y1="205.5" x2="120" y2="205.5" stroke="#787878"/><text x="108.4" y="213.8" font-size="8" fill="#3a3a3a" font-family="Liberation Sans">1</text><line x1="117.5" y1="208.5" x2="120" y2="208.5" stroke="#787878"/><line x1="116" y1="211.5" x2="120" y2="211.5" stroke="#787878"/><line x1="117.5" y1="215.5" x2="120" y2="215.5" stroke="#787878"/><line x1="114.5" y1="218.5" x2="120" y2="218.5" stroke="#787878"/><line x1="117.5" y1="221.5" x2="120" y2="221.5" stroke="#787878"/><line x1="116" y1="225.5" x2="120" y2="225.5" stroke="#787878"/><line x1="117.5" y1="228.5" x2="120" y2="228.5" stroke="#787878"/><line x1="112" y1="231.5" x2="120" y2="231.5" stroke="#787878"/><line x1="117.5" y1="235.5" x2="120" y2="235.5" stroke="#787878"/><line x1="116" y1="238.5" x2="120" y2="238.5" stroke="#787878"/><line x1="117.5" y1="241.5" x2="120" y2="241.5" stroke="#787878"/><line x1="114.5" y1="245.5" x2="120" y2="245.5" stroke="#787878"/><line x1="117.5" y1="248.5" x2="120" y2="248.5" stroke="#787878"/><line x1="116" y1="251.5" x2="120" y2="251.5" stroke="#787878"/><line x1="117.5" y1="255.5" x2="120" y2="255.5" stroke="#787878"/><line x1="107" y1="258.5" x2="120" y2="258.5" stroke="#787878"/><text x="108.4" y="266.8" font-size="8" fill="#3a3a3a" font-family="Liberation Sans">2</text><line x1="117.5" y1="261.5" x2="120" y2="261.5" stroke="#787878"/><line x1="116" y1="265.5" x2="120" y2="265.5" stroke="#787878"/><line x1="117.5" y1="268.5" x2="120" y2="268.5" stroke="#787878"/><line x1="114.5" y1="271.5" x2="120" y2="271.5" stroke="#787878"/><line x1="117.5" y1="275.5" x2="120" y2="275.5" stroke="#787878"/><line x1="116" y1="278.5" x2="120" y2="278.5" stroke="#787878"/><line x1="117.5" y1="281.5" x2="120" y2="281.5" stroke="#787878"/><line x1="112" y1="285.5" x2="120" y2="285.5" stroke="#787878"/><line x1="117.5" y1="288.5" x2="120" y2="288.5" stroke="#787878"/><line x1="116" y1="291.5" x2="120" y2="291.5" stroke="#787878"/><line x1="117.5" y1="295.5" x2="120" y2="295.5" stroke="#787878"/><line x1="114.5" y1="298.5" x2="120" y2="298.5" stroke="#787878"/><line x1="117.5" y1="302.5" x2="120" y2="302.5" stroke="#787878"/><line x1="116" y1="305.5" x2="120" y2="305.5" stroke="#787878"/><line x1="117.5" y1="308.5" x2="120" y2="308.5" stroke="#787878"/><line x1="107" y1="312.5" x2="120" y2="312.5" stroke="#787878"/><text x="108.4" y="320.8" font-size="8" fill="#3a3a3a" font-family="Liberation Sans">3</text><line x1="117.5" y1="315.5" x2="120" y2="315.5" stroke="#787878"/><line x1="116" y1="318.5" x2="120" y2="318.5" stroke="#787878"/><line x1="117.5" y1="322.5" x2="120" y2="322.5" stroke="#787878"/><line x1="114.5" y1="325.5" x2="120" y2="325.5" stroke="#787878"/><line x1="117.5" y1="328.5" x2="120" y2="328.5" stroke="#787878"/><line x1="116" y1="332.5" x2="120" y2="332.5" stroke="#787878"/><line x1="117.5" y1="335.5" x2="120" y2="335.5" stroke="#787878"/><line x1="112" y1="338.5" x2="120" y2="338.5" stroke="#787878"/><line x1="117.5" y1="342.5" x2="120" y2="342.5" stroke="#787878"/><line x1="116" y1="345.5" x2="120" y2="345.5" stroke="#787878"/><line x1="117.5" y1="348.5" x2="120" y2="348.5" stroke="#787878"/><line x1="114.5" y1="352.5" x2="120" y2="352.5" stroke="#787878"/><line x1="117.5" y1="355.5" x2="120" y2="355.5" stroke="#787878"/><line x1="116" y1="358.5" x2="120" y2="358.5" stroke="#787878"/><line x1="117.5" y1="362.5" x2="120" y2="362.5" stroke="#787878"/><line x1="107" y1="365.5" x2="120" y2="365.5" stroke="#787878"/><text x="108.4" y="373.8" font-size="8" fill="#3a3a3a" font-family="Liberation Sans">4</text><line x1="117.5" y1="368.5" x2="120" y2="368.5" stroke="#787878"/><line x1="116" y1="372.5" x2="120" y2="372.5" stroke="#787878"/><line x1="117.5" y1="375.5" x2="120" y2="375.5" stroke="#787878"/><line x1="114.5" y1="378.5" x2="120" y2="378.5" stroke="#787878"/><line x1="117.5" y1="382.5" x2="120" y2="382.5" stroke="#787878"/><line x1="116" y1="385.5" x2="120" y2="385.5" stroke="#787878"/><line x1="117.5" y1="388.5" x2="120" y2="388.5" stroke="#787878"/><line x1="112" y1="392.5" x2="120" y2="392.5" stroke="#787878"/><line x1="117.5" y1="395.5" x2="120" y2="395.5" stroke="#787878"/><line x1="116" y1="398.5" x2="120" y2="398.5" stroke="#787878"/><line x1="117.5" y1="402.5" x2="120" y2="402.5" stroke="#787878"/><line x1="114.5" y1="405.5" x2="120" y2="405.5" stroke="#787878"/><line x1="117.5" y1="408.5" x2="120" y2="408.5" stroke="#787878"/><line x1="116" y1="412.5" x2="120" y2="412.5" stroke="#787878"/><line x1="117.5" y1="415.5" x2="120" y2="415.5" stroke="#787878"/><line x1="107" y1="418.5" x2="120" y2="418.5" stroke="#787878"/><text x="108.4" y="426.8" font-size="8" fill="#3a3a3a" font-family="Liberation Sans">5</text><line x1="117.5" y1="422.5" x2="120" y2="422.5" stroke="#787878"/><line x1="116" y1="425.5" x2="120" y2="425.5" stroke="#787878"/><line x1="117.5" y1="429.5" x2="120" y2="429.5" stroke="#787878"/><line x1="114.5" y1="432.5" x2="120" y2="432.5" stroke="#787878"/><line x1="117.5" y1="435.5" x2="120" y2="435.5" stroke="#787878"/><line x1="116" y1="439.5" x2="120" y2="439.5" stroke="#787878"/><line x1="117.5" y1="442.5" x2="120" y2="442.5" stroke="#787878"/><line x1="112" y1="445.5" x2="120" y2="445.5" stroke="#787878"/><line x1="117.5" y1="449.5" x2="120" y2="449.5" stroke="#787878"/><line x1="116" y1="452.5" x2="120" y2="452.5" stroke="#787878"/><line x1="117.5" y1="455.5" x2="120" y2="455.5" stroke="#787878"/><line x1="114.5" y1="459.5" x2="120" y2="459.5" stroke="#787878"/><line x1="117.5" y1="462.5" x2="120" y2="462.5" stroke="#787878"/><line x1="116" y1="465.5" x2="120" y2="465.5" stroke="#787878"/><line x1="117.5" y1="469.5" x2="120" y2="469.5" stroke="#787878"/><line x1="107" y1="472.5" x2="120" y2="472.5" stroke="#787878"/><text x="108.4" y="480.8" font-size="8" fill="#3a3a3a" font-family="Liberation Sans">6</text><line x1="117.5" y1="475.5" x2="120" y2="475.5" stroke="#787878"/><line x1="116" y1="479.5" x2="120" y2="479.5" stroke="#787878"/><line x1="117.5" y1="482.5" x2="120" y2="482.5" stroke="#787878"/><line x1="114.5" y1="485.5" x2="120" y2="485.5" stroke="#787878"/><line x1="117.5" y1="489.5" x2="120" y2="489.5" stroke="#787878"/><line x1="116" y1="492.5" x2="120" y2="492.5" stroke="#787878"/><line x1="117.5" y1="495.5" x2="120" y2="495.5" stroke="#787878"/><line x1="112" y1="499.5" x2="120" y2="499.5" stroke="#787878"/><line x1="117.5" y1="502.5" x2="120" y2="502.5" stroke="#787878"/><line x1="116" y1="505.5" x2="120" y2="505.5" stroke="#787878"/><line x1="117.5" y1="509.5" x2="120" y2="509.5" stroke="#787878"/><line x1="114.5" y1="512.5" x2="120" y2="512.5" stroke="#787878"/><line x1="117.5" y1="515.5" x2="120" y2="515.5" stroke="#787878"/><line x1="116" y1="519.5" x2="120" y2="519.5" stroke="#787878"/><line x1="117.5" y1="522.5" x2="120" y2="522.5" stroke="#787878"/><line x1="107" y1="525.5" x2="120" y2="525.5" stroke="#787878"/><text x="108.4" y="533.8" font-size="8" fill="#3a3a3a" font-family="Liberation Sans">7</text><line x1="117.5" y1="529.5" x2="120" y2="529.5" stroke="#787878"/><line x1="116" y1="532.5" x2="120" y2="532.5" stroke="#787878"/><line x1="117.5" y1="535.5" x2="120" y2="535.5" stroke="#787878"/><line x1="114.5" y1="539.5" x2="120" y2="539.5" stroke="#787878"/><line x1="117.5" y1="542.5" x2="120" y2="542.5" stroke="#787878"/><line x1="116" y1="546.5" x2="120" y2="546.5" stroke="#787878"/><line x1="117.5" y1="549.5" x2="120" y2="549.5" stroke="#787878"/><line x1="112" y1="552.5" x2="120" y2="552.5" stroke="#787878"/><line x1="117.5" y1="556.5" x2="120" y2="556.5" stroke="#787878"/><line x1="116" y1="559.5" x2="120" y2="559.5" stroke="#787878"/><line x1="117.5" y1="562.5" x2="120" y2="562.5" stroke="#787878"/><line x1="114.5" y1="566.5" x2="120" y2="566.5" stroke="#787878"/><line x1="117.5" y1="569.5" x2="120" y2="569.5" stroke="#787878"/><line x1="116" y1="572.5" x2="120" y2="572.5" stroke="#787878"/><line x1="117.5" y1="576.5" x2="120" y2="576.5" stroke="#787878"/><line x1="107" y1="579.5" x2="120" y2="579.5" stroke="#787878"/><text x="108.4" y="587.8" font-size="8" fill="#3a3a3a" font-family="Liberation Sans">8</text><line x1="117.5" y1="582.5" x2="120" y2="582.5" stroke="#787878"/><line x1="116" y1="586.5" x2="120" y2="586.5" stroke="#787878"/><line x1="117.5" y1="589.5" x2="120" y2="589.5" stroke="#787878"/><line x1="114.5" y1="592.5" x2="120" y2="592.5" stroke="#787878"/><line x1="117.5" y1="596.5" x2="120" y2="596.5" stroke="#787878"/><line x1="116" y1="599.5" x2="120" y2="599.5" stroke="#787878"/><line x1="117.5" y1="602.5" x2="120" y2="602.5" stroke="#787878"/><line x1="112" y1="606.5" x2="120" y2="606.5" stroke="#787878"/><line x1="117.5" y1="609.5" x2="120" y2="609.5" stroke="#787878"/><line x1="116" y1="612.5" x2="120" y2="612.5" stroke="#787878"/><line x1="117.5" y1="616.5" x2="120" y2="616.5" stroke="#787878"/><line x1="114.5" y1="619.5" x2="120" y2="619.5" stroke="#787878"/><line x1="117.5" y1="622.5" x2="120" y2="622.5" stroke="#787878"/><line x1="116" y1="626.5" x2="120" y2="626.5" stroke="#787878"/><line x1="117.5" y1="629.5" x2="120" y2="629.5" stroke="#787878"/><line x1="107" y1="632.5" x2="120" y2="632.5" stroke="#787878"/><text x="108.4" y="640.8" font-size="8" fill="#3a3a3a" font-family="Liberation Sans">9</text><line x1="117.5" y1="636.5" x2="120" y2="636.5" stroke="#787878"/><line x1="116" y1="639.5" x2="120" y2="639.5" stroke="#787878"/><line x1="117.5" y1="642.5" x2="120" y2="642.5" stroke="#787878"/><line x1="114.5" y1="646.5" x2="120" y2="646.5" stroke="#787878"/><line x1="117.5" y1="649.5" x2="120" y2="649.5" stroke="#787878"/><line x1="116" y1="652.5" x2="120" y2="652.5" stroke="#787878"/><line x1="117.5" y1="656.5" x2="120" y2="656.5" stroke="#787878"/><line x1="112" y1="659.5" x2="120" y2="659.5" stroke="#787878"/><line x1="117.5" y1="663.5" x2="120" y2="663.5" stroke="#787878"/><line x1="116" y1="666.5" x2="120" y2="666.5" stroke="#787878"/><line x1="117.5" y1="669.5" x2="120" y2="669.5" stroke="#787878"/><line x1="114.5" y1="673.5" x2="120" y2="673.5" stroke="#787878"/><line x1="117.5" y1="676.5" x2="120" y2="676.5" stroke="#787878"/><line x1="116" y1="679.5" x2="120" y2="679.5" stroke="#787878"/><line x1="117.5" y1="683.5" x2="120" y2="683.5" stroke="#787878"/><line x1="107" y1="686.5" x2="120" y2="686.5" stroke="#787878"/><text x="108.4" y="694.8" font-size="8" fill="#3a3a3a" font-family="Liberation Sans">10</text><line x1="117.5" y1="689.5" x2="120" y2="689.5" stroke="#787878"/><line x1="116" y1="693.5" x2="120" y2="693.5" stroke="#787878"/><line x1="117.5" y1="696.5" x2="120" y2="696.5" stroke="#787878"/><line x1="114.5" y1="699.5" x2="120" y2="699.5" stroke="#787878"/><line x1="117.5" y1="703.5" x2="120" y2="703.5" stroke="#787878"/><line x1="116" y1="706.5" x2="120" y2="706.5" stroke="#787878"/><line x1="117.5" y1="709.5" x2="120" y2="709.5" stroke="#787878"/><line x1="112" y1="713.5" x2="120" y2="713.5" stroke="#787878"/><line x1="117.5" y1="716.5" x2="120" y2="716.5" stroke="#787878"/><line x1="116" y1="719.5" x2="120" y2="719.5" stroke="#787878"/><line x1="117.5" y1="723.5" x2="120" y2="723.5" stroke="#787878"/><line x1="114.5" y1="726.5" x2="120" y2="726.5" stroke="#787878"/><line x1="117.5" y1="729.5" x2="120" y2="729.5" stroke="#787878"/><line x1="116" y1="733.5" x2="120" y2="733.5" stroke="#787878"/><line x1="117.5" y1="736.5" x2="120" y2="736.5" stroke="#787878"/><line x1="107" y1="739.5" x2="120" y2="739.5" stroke="#787878"/><text x="108.4" y="747.8" font-size="8" fill="#3a3a3a" font-family="Liberation Sans">11</text><line x1="117.5" y1="743.5" x2="120" y2="743.5" stroke="#787878"/><line x1="116" y1="746.5" x2="120" y2="746.5" stroke="#787878"/><line x1="117.5" y1="749.5" x2="120" y2="749.5" stroke="#787878"/><line x1="884.5" y1="120" x2="884.5" y2="134" stroke="#222" stroke-width="1"/></svg>
<div class="t" style="left:674.60px;top:6.10px;font-size:10.2px;line-height:11.73px;color:#ecf4f3;transform:scaleX(0.8862);">Publication2 - Publisher</div>
<div class="t" style="left:1272.50px;top:6.00px;font-size:10.2px;line-height:11.73px;color:#ffffff;transform:scaleX(0.8494);">Sign in</div>
<div class="t" style="left:1322.00px;top:6.00px;font-size:10.2px;line-height:11.73px;color:#ffffff;transform:scaleX(0.8070);">?</div>
<div class="t" style="left:16.00px;top:31.98px;font-size:10.0px;line-height:11.50px;color:#ffffff;transform:scaleX(0.8199);">File</div>
<div class="t" style="left:56.50px;top:31.98px;font-size:10.0px;line-height:11.50px;color:#077568;transform:scaleX(0.9326);">Home</div>
<div class="t" style="left:103.00px;top:31.98px;font-size:10.0px;line-height:11.50px;color:#ffffff;transform:scaleX(0.8800);">Insert</div>
<div class="t" style="left:146.80px;top:31.98px;font-size:10.0px;line-height:11.50px;color:#ffffff;transform:scaleX(0.8534);">Page Design</div>
<div class="t" style="left:217.60px;top:31.98px;font-size:10.0px;line-height:11.50px;color:#ffffff;transform:scaleX(0.9237);">Mailings</div>
<div class="t" style="left:273.40px;top:31.98px;font-size:10.0px;line-height:11.50px;color:#ffffff;transform:scaleX(0.8389);">Review</div>
<div class="t" style="left:323.00px;top:31.98px;font-size:10.0px;line-height:11.50px;color:#ffffff;transform:scaleX(0.8889);">View</div>
<div class="t" style="left:8.60px;top:80.41px;font-size:10.3px;line-height:11.85px;color:#444444;transform:scaleX(0.8023);">Paste</div>
<div class="t" style="left:51.50px;top:54.87px;font-size:9.8px;line-height:11.27px;color:#a5a5a5;transform:scaleX(0.9020);">Cut</div>
<div class="t" style="left:51.50px;top:71.97px;font-size:9.8px;line-height:11.27px;color:#a5a5a5;transform:scaleX(0.9170);">Copy</div>
<div class="t" style="left:51.50px;top:89.37px;font-size:9.8px;line-height:11.27px;color:#a5a5a5;transform:scaleX(0.9028);">Format Painter</div>
<div class="t" style="left:34.00px;top:107.24px;font-size:9.4px;line-height:10.81px;color:#5e5e5e;transform:scaleX(0.9453);">Clipboard</div>
<div class="t" style="left:194.60px;top:107.24px;font-size:9.4px;line-height:10.81px;color:#5e5e5e;transform:scaleX(0.9255);">Font</div>
<div class="t" style="left:350.40px;top:107.24px;font-size:9.4px;line-height:10.81px;color:#5e5e5e;transform:scaleX(0.8975);">Paragraph</div>
<div class="t" style="left:460.40px;top:107.24px;font-size:9.4px;line-height:10.81px;color:#5e5e5e;transform:scaleX(0.8125);">Styles</div>
<div class="t" style="left:547.00px;top:107.24px;font-size:9.4px;line-height:10.81px;color:#5e5e5e;transform:scaleX(0.9091);">Objects</div>
<div class="t" style="left:710.00px;top:107.24px;font-size:9.4px;line-height:10.81px;color:#5e5e5e;transform:scaleX(0.9281);">Arrange</div>
<div class="t" style="left:835.50px;top:107.24px;font-size:9.4px;line-height:10.81px;color:#5e5e5e;transform:scaleX(0.9582);">Editing</div>
<div class="t" style="left:460.00px;top:80.21px;font-size:10.3px;line-height:11.85px;color:#444444;transform:scaleX(0.8214);">Styles</div>
<div class="t" style="left:502.00px;top:79.91px;font-size:10.3px;line-height:11.85px;color:#444444;transform:scaleX(0.8174);">Draw</div>
<div class="t" style="left:496.00px;top:91.81px;font-size:10.3px;line-height:11.85px;color:#444444;transform:scaleX(0.8101);">Text Box</div>
<div class="t" style="left:531.50px;top:79.91px;font-size:10.3px;line-height:11.85px;color:#444444;transform:scaleX(0.8522);">Pictures</div>
<div class="t" style="left:571.50px;top:79.91px;font-size:10.3px;line-height:11.85px;color:#444444;transform:scaleX(0.8333);">Table</div>
<div class="t" style="left:598.50px;top:79.91px;font-size:10.3px;line-height:11.85px;color:#444444;transform:scaleX(0.7880);">Shapes</div>
<div class="t" style="left:641.00px;top:80.61px;font-size:10.3px;line-height:11.85px;color:#a5a5a5;transform:scaleX(0.8607);">Wrap</div>
<div class="t" style="left:641.00px;top:91.71px;font-size:10.3px;line-height:11.85px;color:#a5a5a5;transform:scaleX(0.7937);">Text</div>
<div class="t" style="left:683.70px;top:54.87px;font-size:9.8px;line-height:11.27px;color:#a5a5a5;transform:scaleX(0.9041);">Bring Forward</div>
<div class="t" style="left:683.70px;top:72.37px;font-size:9.8px;line-height:11.27px;color:#a5a5a5;transform:scaleX(0.8790);">Send Backward</div>
<div class="t" style="left:684.00px;top:89.67px;font-size:9.8px;line-height:11.27px;color:#444444;transform:scaleX(0.9633);">Align</div>
<div class="t" style="left:776.00px;top:54.87px;font-size:9.8px;line-height:11.27px;color:#a5a5a5;transform:scaleX(0.8824);">Group</div>
<div class="t" style="left:776.00px;top:72.37px;font-size:9.8px;line-height:11.27px;color:#a5a5a5;transform:scaleX(0.9309);">Ungroup</div>
<div class="t" style="left:776.00px;top:89.67px;font-size:9.8px;line-height:11.27px;color:#a5a5a5;transform:scaleX(0.8997);">Rotate</div>
<div class="t" style="left:839.90px;top:54.57px;font-size:9.8px;line-height:11.27px;color:#444444;transform:scaleX(0.8743);">Find</div>
<div class="t" style="left:840.00px;top:72.07px;font-size:9.8px;line-height:11.27px;color:#444444;transform:scaleX(0.8611);">Replace</div>
<div class="t" style="left:840.00px;top:89.17px;font-size:9.8px;line-height:11.27px;color:#444444;transform:scaleX(0.8456);">Select</div>
<div class="t" style="left:5.70px;top:126.73px;font-size:17px;line-height:19.55px;color:#1f7a70;transform:scaleX(0.8361);">Pages</div>
<div class="t" style="left:5.60px;top:769.47px;font-size:9.8px;line-height:11.27px;color:#444;transform:scaleX(0.8469);">Page: 1 of 4</div>
<div class="t" style="left:1404.40px;top:769.17px;font-size:9.8px;line-height:11.27px;color:#555;transform:scaleX(0.7908);">74%</div>
<div style="position:absolute;left:551px;top:150px;width:456px;height:590px;background:#fff;box-sizing:border-box;border:1px solid #cdcdcd;"></div>
<svg style="left:0px;top:0px;" width="1445" height="782" viewBox="0 0 1445 782"><defs><clipPath id="cc"><rect x="578" y="178" width="402" height="535"/></clipPath></defs><rect x="578" y="178" width="402" height="535" fill="#ee6a59"/><g clip-path="url(#cc)"><path fill="#e1614e" d="M906 260 C930 262 948 290 946 320 C944 360 915 400 880 428 C850 452 815 475 800 500 L671 715 L638 715 L770 500 C790 450 800 420 801 400 C802 360 812 320 836 296 C855 276 880 259 906 260 Z"/><path fill="#e1614e" d="M694 431 L744 431 L737 480 L719 567 L702 715 L665 715 L684.6 600 L699.6 480 Z"/><path fill="none" stroke="#e1614e" stroke-width="4.6" d="M712 178 C706.3 181.7 685.3 189.7 678 200 C670.7 210.3 669.3 226.7 668 240 C666.7 253.3 668.7 265.0 670 280 C671.3 295.0 673.7 313.3 676 330 C678.3 346.7 681.2 362.7 684 380 C686.8 397.3 691.5 425.0 693 434"/><path fill="none" stroke="#e1614e" stroke-width="4.6" d="M735 178 C729.2 181.7 707.5 189.7 700 200 C692.5 210.3 692.2 226.7 690 240 C687.8 253.3 687.5 265.0 687 280 C686.5 295.0 685.8 313.3 687 330 C688.2 346.7 691.5 362.7 694 380 C696.5 397.3 700.7 425.0 702 434"/><path fill="none" stroke="#e1614e" stroke-width="4.6" d="M760 178 C755.8 181.7 742.3 189.7 735 200 C727.7 210.3 721.0 226.7 716 240 C711.0 253.3 707.7 265.0 705 280 C702.3 295.0 700.0 313.3 700 330 C700.0 346.7 703.0 362.7 705 380 C707.0 397.3 710.8 425.0 712 434"/><path fill="none" stroke="#e1614e" stroke-width="4.6" d="M729 178 C729.0 181.7 729.2 189.7 729 200 C728.8 210.3 728.3 226.7 728 240 C727.7 253.3 727.3 265.0 727 280 C726.7 295.0 726.5 313.3 726 330 C725.5 346.7 724.7 362.7 724 380 C723.3 397.3 722.3 425.0 722 434"/><path fill="none" stroke="#e1614e" stroke-width="4.6" d="M700 178 C707.8 181.7 738.7 189.7 747 200 C755.3 210.3 749.8 226.7 750 240 C750.2 253.3 749.2 265.0 748 280 C746.8 295.0 745.0 313.3 743 330 C741.0 346.7 738.2 362.7 736 380 C733.8 397.3 731.0 425.0 730 434"/><path fill="none" stroke="#e1614e" stroke-width="4.6" d="M720 178 C730.8 181.7 772.8 189.7 785 200 C797.2 210.3 792.2 226.7 793 240 C793.8 253.3 792.3 265.0 790 280 C787.7 295.0 784.0 313.3 779 330 C774.0 346.7 766.5 362.7 760 380 C753.5 397.3 743.3 425.0 740 434"/><path fill="none" stroke="#e1614e" stroke-width="4.6" d="M745 178 C754.7 181.7 791.2 189.7 803 200 C814.8 210.3 814.8 226.7 816 240 C817.2 253.3 813.8 265.0 810 280 C806.2 295.0 799.7 313.3 793 330 C786.3 346.7 777.5 362.7 770 380 C762.5 397.3 751.7 425.0 748 434"/></g><rect x="611.2" y="332" width="9.50" height="98.50" fill="#fbead7"/><rect x="598.6" y="359" width="36.20" height="8.30" fill="#fbead7"/><rect x="647.8" y="332" width="9.40" height="98.50" fill="#fbead7"/><path fill="none" stroke="#fbead7" stroke-width="9.3" d="M652.5 430.5 L652.5 389 A27.05 27.05 0 0 1 706.6 389 L706.6 430.5"/><path fill="none" stroke="#fbead7" stroke-width="9.3" d="M794.66 392.80 A32.40 32.40 0 1 0 791.17 409.21"/><rect x="729" y="387.3" width="70.30" height="9.10" fill="#fbead7"/><path fill="none" stroke="#fbead7" stroke-width="9.3" d="M669.34 521.02 A36.0 32.65 0 1 0 669.34 558.48"/><circle cx="723.25" cy="539.75" r="32.70" fill="none" stroke="#fbead7" stroke-width="9.3"/><circle cx="810.4" cy="539.75" r="32.70" fill="none" stroke="#fbead7" stroke-width="9.3"/><rect x="864.1" y="476.9" width="9.70" height="99.10" fill="#fbead7"/><polygon fill="#fbead7" points="873.50,530.70 904.50,504.10 919.10,504.10 881.00,537.60 922.20,576.00 907.60,576.00 873.50,544.50"/><rect x="602.9" y="588" width="9.50" height="98.60" fill="#fbead7"/><circle cx="640" cy="650" r="32.95" fill="none" stroke="#fbead7" stroke-width="9.3"/><circle cx="727" cy="650" r="32.75" fill="none" stroke="#fbead7" stroke-width="9.3"/><circle cx="814.15" cy="650" r="32.75" fill="none" stroke="#fbead7" stroke-width="9.3"/><rect x="865.3000000000001" y="587.5" width="9.70" height="99.10" fill="#fbead7"/><polygon fill="#fbead7" points="874.70,641.30 905.70,614.70 920.30,614.70 882.20,648.20 923.40,686.60 908.80,686.60 874.70,655.10"/><g fill="none" stroke="#232326" stroke-width="1.5"><ellipse cx="608.3" cy="467.15" rx="4.45" ry="4.8"/><path d="M612.75 461.6 L612.75 472.7"/><path d="M618.05 458.5 L618.05 472.7"/><ellipse cx="622.5" cy="467.15" rx="4.45" ry="4.8"/><path d="M640.05 467.32 A4.6 4.8 0 1 0 639.07 470.11"/><path d="M630.85 467.5 L640.05 467.5"/><path d="M644.35 461.6 L644.35 472.7"/><path d="M644.35 466.35 Q644.65 462.35 648.6 462.35"/><path d="M658.90 464.61 A4.6 4.8 0 1 0 658.90 469.69"/><path d="M664.45 461.6 L664.45 472.7"/><path d="M664.45 466.35 Q664.75 462.35 668.2 462.35"/><ellipse cx="674.4" cy="467.15" rx="4.75" ry="4.8"/><path d="M682.75 461.6 L682.75 472.7"/><path d="M682.75 472.7 L682.75 465.95000000000005 A3.6000000000000227 3.6000000000000227 0 0 1 689.95 465.95000000000005 L689.95 472.7 M689.95 465.95000000000005 A3.6000000000000227 3.6000000000000227 0 0 1 697.15 465.95000000000005 L697.15 472.7"/><path d="M701.95 458.5 L701.95 472.7"/><ellipse cx="706.9" cy="467.15" rx="4.45" ry="4.8"/><path d="M715.3 461.6 L715.3 472.7"/><circle cx="715.3" cy="459.6" r="0.95" fill="#232326" stroke="none"/><path d="M728.45 467.32 A4.7 4.8 0 1 0 727.45 470.11"/><path d="M719.05 467.5 L728.45 467.5"/><path d="M738.95 472.7 L738.95 461.3 Q738.95 458.5 742.3 458.5"/><path d="M736.8 462.4 L741.9 462.4"/><ellipse cx="749.75" cy="467.15" rx="4.5" ry="4.8"/><path d="M754.25 461.6 L754.25 472.7"/><path d="M757.85 461.6 L757.85 472.7"/><path d="M757.85 472.7 L757.85 465.975 A3.625 3.625 0 0 1 765.1 465.975 L765.1 472.7 M765.1 465.975 A3.625 3.625 0 0 1 772.35 465.975 L772.35 472.7"/><path d="M777.15 461.6 L777.15 472.7"/><circle cx="777.15" cy="459.6" r="0.95" fill="#232326" stroke="none"/><path d="M781.15 458.5 L781.15 472.7"/><path d="M783.6 461.85 L788.6 472.3"/><path d="M793.2 461.85 L786.2 476.2"/></g><rect x="578.5" y="178.5" width="401" height="534" fill="none" stroke="#ea5c47" stroke-width="1"/><line x1="578" y1="324.5" x2="980" y2="324.5" stroke="#f0624c" stroke-width="1.2"/><line x1="578" y1="324.5" x2="980" y2="324.5" stroke="#d9bfb7" stroke-width="1.2" stroke-dasharray="3 2.2"/><line x1="578" y1="452" x2="980" y2="452" stroke="#f0624c" stroke-width="1.2"/><line x1="578" y1="452" x2="980" y2="452" stroke="#d9bfb7" stroke-width="1.2" stroke-dasharray="3 2.2"/><line x1="578" y1="474.5" x2="980" y2="474.5" stroke="#f0624c" stroke-width="1.2"/><line x1="578" y1="474.5" x2="980" y2="474.5" stroke="#d9bfb7" stroke-width="1.2" stroke-dasharray="3 2.2"/><line x1="578" y1="705" x2="980" y2="705" stroke="#f0624c" stroke-width="1.2"/><line x1="578" y1="705" x2="980" y2="705" stroke="#d9bfb7" stroke-width="1.2" stroke-dasharray="3 2.2"/><line x1="578.5" y1="324" x2="578.5" y2="705" stroke="#cfe2e6" stroke-width="1" stroke-dasharray="3 2.2"/><line x1="979.5" y1="324" x2="979.5" y2="705" stroke="#cfe2e6" stroke-width="1" stroke-dasharray="3 2.2"/></svg>
<svg style="left:0px;top:0px;" width="1445" height="782" viewBox="0 0 1445 782"><rect x="12.8" y="164.8" width="79" height="109.8" fill="#9ccccb"/><rect x="14.5" y="166.6" width="75.5" height="96.4" fill="#fff" stroke="#b9c9c8" stroke-width="0.6"/><g transform="translate(20.3,172.3) scale(0.16095) translate(-578,-178)"><rect x="578" y="178" width="402" height="535" fill="#ee6a59"/><g clip-path="url(#cc)"><path fill="#e9674f" d="M906 260 C930 262 948 290 946 320 C944 360 915 400 880 428 C850 452 815 475 800 500 L671 715 L638 715 L770 500 C790 450 800 420 801 400 C802 360 812 320 836 296 C855 276 880 259 906 260 Z"/><path fill="#e9674f" d="M694 431 L744 431 L737 480 L719 567 L702 715 L665 715 L684.6 600 L699.6 480 Z"/><path fill="none" stroke="#ec6955" stroke-width="4.6" d="M712 178 C706.3 181.7 685.3 189.7 678 200 C670.7 210.3 669.3 226.7 668 240 C666.7 253.3 668.7 265.0 670 280 C671.3 295.0 673.7 313.3 676 330 C678.3 346.7 681.2 362.7 684 380 C686.8 397.3 691.5 425.0 693 434"/><path fill="none" stroke="#ec6955" stroke-width="4.6" d="M735 178 C729.2 181.7 707.5 189.7 700 200 C692.5 210.3 692.2 226.7 690 240 C687.8 253.3 687.5 265.0 687 280 C686.5 295.0 685.8 313.3 687 330 C688.2 346.7 691.5 362.7 694 380 C696.5 397.3 700.7 425.0 702 434"/><path fill="none" stroke="#ec6955" stroke-width="4.6" d="M760 178 C755.8 181.7 742.3 189.7 735 200 C727.7 210.3 721.0 226.7 716 240 C711.0 253.3 707.7 265.0 705 280 C702.3 295.0 700.0 313.3 700 330 C700.0 346.7 703.0 362.7 705 380 C707.0 397.3 710.8 425.0 712 434"/><path fill="none" stroke="#ec6955" stroke-width="4.6" d="M729 178 C729.0 181.7 729.2 189.7 729 200 C728.8 210.3 728.3 226.7 728 240 C727.7 253.3 727.3 265.0 727 280 C726.7 295.0 726.5 313.3 726 330 C725.5 346.7 724.7 362.7 724 380 C723.3 397.3 722.3 425.0 722 434"/><path fill="none" stroke="#ec6955" stroke-width="4.6" d="M700 178 C707.8 181.7 738.7 189.7 747 200 C755.3 210.3 749.8 226.7 750 240 C750.2 253.3 749.2 265.0 748 280 C746.8 295.0 745.0 313.3 743 330 C741.0 346.7 738.2 362.7 736 380 C733.8 397.3 731.0 425.0 730 434"/><path fill="none" stroke="#ec6955" stroke-width="4.6" d="M720 178 C730.8 181.7 772.8 189.7 785 200 C797.2 210.3 792.2 226.7 793 240 C793.8 253.3 792.3 265.0 790 280 C787.7 295.0 784.0 313.3 779 330 C774.0 346.7 766.5 362.7 760 380 C753.5 397.3 743.3 425.0 740 434"/><path fill="none" stroke="#ec6955" stroke-width="4.6" d="M745 178 C754.7 181.7 791.2 189.7 803 200 C814.8 210.3 814.8 226.7 816 240 C817.2 253.3 813.8 265.0 810 280 C806.2 295.0 799.7 313.3 793 330 C786.3 346.7 777.5 362.7 770 380 C762.5 397.3 751.7 425.0 748 434"/></g><rect x="611.2" y="332" width="9.50" height="98.50" fill="#fbead7" stroke="#fbead7" stroke-width="1.4"/><rect x="598.6" y="359" width="36.20" height="8.30" fill="#fbead7" stroke="#fbead7" stroke-width="1.4"/><rect x="647.8" y="332" width="9.40" height="98.50" fill="#fbead7" stroke="#fbead7" stroke-width="1.4"/><path fill="none" stroke="#fbead7" stroke-width="10.7" d="M652.5 430.5 L652.5 389 A27.05 27.05 0 0 1 706.6 389 L706.6 430.5"/><path fill="none" stroke="#fbead7" stroke-width="10.7" d="M794.66 392.80 A32.40 32.40 0 1 0 791.17 409.21"/><rect x="729" y="387.3" width="70.30" height="9.10" fill="#fbead7" stroke="#fbead7" stroke-width="1.4"/><path fill="none" stroke="#fbead7" stroke-width="10.7" d="M669.34 521.02 A36.0 32.65 0 1 0 669.34 558.48"/><circle cx="723.25" cy="539.75" r="32.70" fill="none" stroke="#fbead7" stroke-width="10.7"/><circle cx="810.4" cy="539.75" r="32.70" fill="none" stroke="#fbead7" stroke-width="10.7"/><rect x="864.1" y="476.9" width="9.70" height="99.10" fill="#fbead7" stroke="#fbead7" stroke-width="1.4"/><polygon fill="#fbead7" points="873.50,530.70 904.50,504.10 919.10,504.10 881.00,537.60 922.20,576.00 907.60,576.00 873.50,544.50"/><rect x="602.9" y="588" width="9.50" height="98.60" fill="#fbead7" stroke="#fbead7" stroke-width="1.4"/><circle cx="640" cy="650" r="32.95" fill="none" stroke="#fbead7" stroke-width="10.7"/><circle cx="727" cy="650" r="32.75" fill="none" stroke="#fbead7" stroke-width="10.7"/><circle cx="814.15" cy="650" r="32.75" fill="none" stroke="#fbead7" stroke-width="10.7"/><rect x="865.3000000000001" y="587.5" width="9.70" height="99.10" fill="#fbead7" stroke="#fbead7" stroke-width="1.4"/><polygon fill="#fbead7" points="874.70,641.30 905.70,614.70 920.30,614.70 882.20,648.20 923.40,686.60 908.80,686.60 874.70,655.10"/><g fill="none" stroke="#1a1a1a" stroke-width="6"><ellipse cx="608.3" cy="467.15" rx="4.45" ry="4.8"/><path d="M612.75 461.6 L612.75 472.7"/><path d="M618.05 458.5 L618.05 472.7"/><ellipse cx="622.5" cy="467.15" rx="4.45" ry="4.8"/><path d="M640.05 467.32 A4.6 4.8 0 1 0 639.07 470.11"/><path d="M630.85 467.5 L640.05 467.5"/><path d="M644.35 461.6 L644.35 472.7"/><path d="M644.35 466.35 Q644.65 462.35 648.6 462.35"/><path d="M658.90 464.61 A4.6 4.8 0 1 0 658.90 469.69"/><path d="M664.45 461.6 L664.45 472.7"/><path d="M664.45 466.35 Q664.75 462.35 668.2 462.35"/><ellipse cx="674.4" cy="467.15" rx="4.75" ry="4.8"/><path d="M682.75 461.6 L682.75 472.7"/><path d="M682.75 472.7 L682.75 465.95000000000005 A3.6000000000000227 3.6000000000000227 0 0 1 689.95 465.95000000000005 L689.95 472.7 M689.95 465.95000000000005 A3.6000000000000227 3.6000000000000227 0 0 1 697.15 465.95000000000005 L697.15 472.7"/><path d="M701.95 458.5 L701.95 472.7"/><ellipse cx="706.9" cy="467.15" rx="4.45" ry="4.8"/><path d="M715.3 461.6 L715.3 472.7"/><circle cx="715.3" cy="459.6" r="0.95" fill="#232326" stroke="none"/><path d="M728.45 467.32 A4.7 4.8 0 1 0 727.45 470.11"/><path d="M719.05 467.5 L728.45 467.5"/><path d="M738.95 472.7 L738.95 461.3 Q738.95 458.5 742.3 458.5"/><path d="M736.8 462.4 L741.9 462.4"/><ellipse cx="749.75" cy="467.15" rx="4.5" ry="4.8"/><path d="M754.25 461.6 L754.25 472.7"/><path d="M757.85 461.6 L757.85 472.7"/><path d="M757.85 472.7 L757.85 465.975 A3.625 3.625 0 0 1 765.1 465.975 L765.1 472.7 M765.1 465.975 A3.625 3.625 0 0 1 772.35 465.975 L772.35 472.7"/><path d="M777.15 461.6 L777.15 472.7"/><circle cx="777.15" cy="459.6" r="0.95" fill="#232326" stroke="none"/><path d="M781.15 458.5 L781.15 472.7"/><path d="M783.6 461.85 L788.6 472.3"/><path d="M793.2 461.85 L786.2 476.2"/></g></g><text x="52" y="271.8" font-size="8.5" font-weight="bold" fill="#222" text-anchor="middle" font-family="Liberation Sans">1</text><rect x="14.5" y="281.2" width="76" height="95.5" rx="1" fill="#fff" stroke="#c4c4c4" stroke-width="1"/><text x="52" y="386" font-size="8.5" font-weight="bold" fill="#333" text-anchor="middle" font-family="Liberation Sans">2</text><rect x="14.5" y="396.1" width="76" height="95.19999999999999" rx="1" fill="#fff" stroke="#c4c4c4" stroke-width="1"/><text x="52" y="500" font-size="8.5" font-weight="bold" fill="#333" text-anchor="middle" font-family="Liberation Sans">3</text><rect x="14.5" y="510.2" width="76" height="95.80000000000001" rx="1" fill="#fff" stroke="#c4c4c4" stroke-width="1"/><text x="52" y="615" font-size="8.5" font-weight="bold" fill="#333" text-anchor="middle" font-family="Liberation Sans">4</text><text x="20" y="295" font-size="9.5" fill="#ef7b5e" font-weight="normal" font-family="Liberation Sans" textLength="40.7" lengthAdjust="spacingAndGlyphs">veggies</text><rect x="21" y="337.5" width="2" height="1.4" fill="#ef7b5e"/><text x="25.4" y="339.8" font-size="4.4" fill="#333" font-weight="normal" font-family="Liberation Sans" textLength="23.6" lengthAdjust="spacingAndGlyphs">grilled tofu</text><rect x="21" y="342.9" width="2" height="1.4" fill="#ef7b5e"/><text x="25.4" y="345.2" font-size="4.4" fill="#333" font-weight="normal" font-family="Liberation Sans" textLength="37.800000000000004" lengthAdjust="spacingAndGlyphs">mushroom pizza</text><rect x="21" y="348.3" width="2" height="1.4" fill="#ef7b5e"/><text x="25.4" y="350.6" font-size="4.4" fill="#333" font-weight="normal" font-family="Liberation Sans" textLength="45.6" lengthAdjust="spacingAndGlyphs">stuffed bell peppers</text><rect x="21" y="353.7" width="2" height="1.4" fill="#ef7b5e"/><text x="25.4" y="356.0" font-size="4.4" fill="#333" font-weight="normal" font-family="Liberation Sans" textLength="36.800000000000004" lengthAdjust="spacingAndGlyphs">classic chili soup</text><rect x="21" y="359.1" width="2" height="1.4" fill="#ef7b5e"/><text x="25.4" y="361.40000000000003" font-size="4.4" fill="#333" font-weight="normal" font-family="Liberation Sans" textLength="45.199999999999996" lengthAdjust="spacingAndGlyphs">black bean burgers</text><rect x="21" y="364.5" width="2" height="1.4" fill="#ef7b5e"/><text x="25.4" y="366.8" font-size="4.4" fill="#333" font-weight="normal" font-family="Liberation Sans" textLength="44.199999999999996" lengthAdjust="spacingAndGlyphs">cheese enchiladas</text><text x="21" y="410.3" font-size="9.5" fill="#e9623f" font-weight="normal" font-family="Liberation Sans" textLength="42.7" lengthAdjust="spacingAndGlyphs">grilled tofu</text><rect x="21" y="413.05" width="17.00" height="0.9" fill="#888" opacity="0.6"/><rect x="21" y="419.25" width="12.00" height="1.5" fill="#333" opacity="0.6"/><rect x="38" y="419.25" width="13.00" height="1.5" fill="#333" opacity="0.6"/><rect x="55" y="419.25" width="7.00" height="1.5" fill="#333" opacity="0.6"/><rect x="21" y="422.55" width="10.00" height="0.9" fill="#ef7b5e" opacity="0.6"/><rect x="38" y="422.55" width="13.00" height="0.9" fill="#ef7b5e" opacity="0.6"/><rect x="38" y="425.05" width="12.00" height="0.9" fill="#ef7b5e" opacity="0.6"/><rect x="38" y="427.55" width="11.00" height="0.9" fill="#ef7b5e" opacity="0.6"/><rect x="55" y="422.55" width="7.00" height="0.9" fill="#ef7b5e" opacity="0.6"/><rect x="21" y="433.10" width="19.00" height="1.4" fill="#333" opacity="0.6"/><rect x="21" y="437.35" width="10.00" height="0.9" fill="#ef7b5e" opacity="0.6"/><rect x="21" y="440.05" width="16.00" height="0.9" fill="#555" opacity="0.6"/><rect x="21" y="442.55" width="9.00" height="0.9" fill="#ef7b5e" opacity="0.6"/><rect x="21" y="445.55" width="17.00" height="0.9" fill="#555" opacity="0.6"/><rect x="21" y="448.05" width="8.00" height="0.9" fill="#ef7b5e" opacity="0.6"/><rect x="21" y="450.55" width="16.00" height="0.9" fill="#555" opacity="0.6"/><rect x="21" y="452.05" width="12.00" height="0.9" fill="#555" opacity="0.6"/><rect x="21" y="455.05" width="16.00" height="0.9" fill="#ef7b5e" opacity="0.6"/><rect x="21" y="458.05" width="13.00" height="0.9" fill="#555" opacity="0.6"/><rect x="21" y="461.05" width="8.00" height="0.9" fill="#ef7b5e" opacity="0.6"/><rect x="21" y="464.05" width="11.00" height="0.9" fill="#555" opacity="0.6"/><rect x="55" y="437.35" width="19.00" height="0.9" fill="#ef7b5e" opacity="0.6"/><rect x="55" y="440.05" width="12.00" height="0.9" fill="#555" opacity="0.6"/><rect x="55" y="442.55" width="8.00" height="0.9" fill="#ef7b5e" opacity="0.6"/><rect x="55" y="445.55" width="6.00" height="0.9" fill="#555" opacity="0.6"/><rect x="55" y="448.05" width="9.00" height="0.9" fill="#ef7b5e" opacity="0.6"/><rect x="55" y="450.55" width="7.00" height="0.9" fill="#555" opacity="0.6"/><rect x="55" y="454.55" width="5.00" height="0.9" fill="#ef7b5e" opacity="0.6"/><rect x="55" y="457.05" width="19.00" height="0.9" fill="#555" opacity="0.6"/><rect x="21" y="522.50" width="17.00" height="1.8" fill="#333" opacity="0.6"/><rect x="21" y="527.80" width="1.50" height="1.2" fill="#ef7b5e" opacity="0.6"/><rect x="21" y="533.40" width="1.50" height="1.2" fill="#ef7b5e" opacity="0.6"/><rect x="21" y="538.00" width="1.50" height="1.2" fill="#ef7b5e" opacity="0.6"/><rect x="21" y="542.40" width="1.50" height="1.2" fill="#ef7b5e" opacity="0.6"/><rect x="21" y="550.40" width="1.50" height="1.2" fill="#ef7b5e" opacity="0.6"/><rect x="21" y="553.90" width="1.50" height="1.2" fill="#ef7b5e" opacity="0.6"/><rect x="24" y="527.65" width="54.00" height="0.7" fill="#777" opacity="0.55"/><rect x="24" y="529.45" width="22.00" height="0.7" fill="#777" opacity="0.55"/><rect x="24" y="533.55" width="51.00" height="0.7" fill="#777" opacity="0.55"/><rect x="24" y="535.25" width="24.00" height="0.7" fill="#777" opacity="0.55"/><rect x="24" y="538.15" width="53.00" height="0.7" fill="#777" opacity="0.55"/><rect x="24" y="539.95" width="27.00" height="0.7" fill="#777" opacity="0.55"/><rect x="24" y="542.65" width="52.00" height="0.7" fill="#777" opacity="0.55"/><rect x="24" y="544.45" width="46.00" height="0.7" fill="#777" opacity="0.55"/><rect x="24" y="546.15" width="38.00" height="0.7" fill="#777" opacity="0.55"/><rect x="24" y="547.95" width="14.00" height="0.7" fill="#777" opacity="0.55"/><rect x="24" y="550.65" width="33.00" height="0.7" fill="#777" opacity="0.55"/><rect x="24" y="554.05" width="29.00" height="0.7" fill="#777" opacity="0.55"/><rect x="21" y="561.90" width="20.00" height="1.8" fill="#333" opacity="0.6"/><rect x="61" y="600.40" width="19.00" height="1.2" fill="#444" opacity="0.6"/><rect x="82" y="600.40" width="2.00" height="1.2" fill="#ef7b5e" opacity="0.6"/></svg>
<svg style="left:0px;top:0px;" width="1445" height="782" viewBox="0 0 1445 782"><line x1="118.5" y1="52" x2="118.5" y2="115" stroke="#d6d6d6" stroke-width="1"/><line x1="300.5" y1="52" x2="300.5" y2="115" stroke="#d6d6d6" stroke-width="1"/><line x1="452.5" y1="52" x2="452.5" y2="115" stroke="#d6d6d6" stroke-width="1"/><line x1="490.5" y1="52" x2="490.5" y2="115" stroke="#d6d6d6" stroke-width="1"/><line x1="632.5" y1="52" x2="632.5" y2="115" stroke="#d6d6d6" stroke-width="1"/><line x1="819.5" y1="52" x2="819.5" y2="115" stroke="#d6d6d6" stroke-width="1"/><line x1="879.5" y1="52" x2="879.5" y2="115" stroke="#d6d6d6" stroke-width="1"/><line x1="277.5" y1="57" x2="277.5" y2="74" stroke="#d6d6d6" stroke-width="1"/><line x1="233.5" y1="81" x2="233.5" y2="96" stroke="#d6d6d6" stroke-width="1"/><line x1="264.5" y1="81" x2="264.5" y2="96" stroke="#d6d6d6" stroke-width="1"/><line x1="357.5" y1="57" x2="357.5" y2="72" stroke="#d6d6d6" stroke-width="1"/><line x1="397.5" y1="57" x2="397.5" y2="72" stroke="#d6d6d6" stroke-width="1"/><line x1="429.5" y1="57" x2="429.5" y2="72" stroke="#d6d6d6" stroke-width="1"/><line x1="374.5" y1="81" x2="374.5" y2="96" stroke="#d6d6d6" stroke-width="1"/><path d="M110 109.5 L110 114.5 L115 114.5" fill="none" stroke="#8c8c8c" stroke-width="0.9"/><path d="M111.5 110.5 L114.5 113.5 M114.5 111 L114.5 113.5 L112 113.5" fill="none" stroke="#8c8c8c" stroke-width="0.9"/><path d="M292 109.5 L292 114.5 L297 114.5" fill="none" stroke="#8c8c8c" stroke-width="0.9"/><path d="M293.5 110.5 L296.5 113.5 M296.5 111 L296.5 113.5 L294 113.5" fill="none" stroke="#8c8c8c" stroke-width="0.9"/><path d="M443 109.5 L443 114.5 L448 114.5" fill="none" stroke="#8c8c8c" stroke-width="0.9"/><path d="M444.5 110.5 L447.5 113.5 M447.5 111 L447.5 113.5 L445 113.5" fill="none" stroke="#8c8c8c" stroke-width="0.9"/><rect x="9.8" y="57" width="18.2" height="19" rx="1" fill="#f5b8a2"/><path d="M13.3 60.2 L13.3 58 Q13.3 57.2 14.2 57.2 L17 57.2 Q17.5 55 19.6 55 Q21.7 55 22.2 57.2 L23.4 57.2 Q24.2 57.2 24.2 58 L24.2 60.2 Z" fill="#555"/><path d="M20.5 63.6 L27.2 63.6 L30.6 67 L30.6 77.3 L20.5 77.3 Z" fill="#fff" stroke="#6a6a6a" stroke-width="1"/><path d="M27 63.6 L27 67.2 L30.6 67.2" fill="none" stroke="#6a6a6a" stroke-width="1"/><path d="M16.299999999999997 95.8 L20.5 95.8 L18.4 98.2 Z" fill="#555"/><path d="M39.5 54.5 L45 61 M46 54.5 L40.5 61" stroke="#b3b3b3" stroke-width="1.2" fill="none"/><circle cx="40.2" cy="62.6" r="2.1" fill="none" stroke="#b3b3b3" stroke-width="1.1"/><circle cx="45.6" cy="62.6" r="2.1" fill="none" stroke="#b3b3b3" stroke-width="1.1"/><path d="M37.5 71.5 L42 71.5 L44 73.5 L44 79.5 L37.5 79.5 Z" fill="none" stroke="#b3b3b3" stroke-width="1"/><path d="M41.5 74.5 L46 74.5 L48 76.5 L48 82.5 L41.5 82.5 Z" fill="#f1f1f1" stroke="#b3b3b3" stroke-width="1"/><path d="M38 96 L43.5 90.5 L47 94 L41.5 99.5 Z" fill="#cfcfcf"/><path d="M44.5 89.5 L47.5 86.8 L49.5 88.8 L46.8 91.8 Z" fill="#b3b3b3"/><rect x="122.5" y="57.5" width="88" height="17" fill="#fdfdfd" stroke="#c6c6c6"/><rect x="210.5" y="57.5" width="30" height="17" fill="#fdfdfd" stroke="#c6c6c6"/><path d="M203.0 64.9 L207.0 64.9 L205 67.1 Z" fill="#a0a0a0"/><path d="M233.5 64.9 L237.5 64.9 L235.5 67.1 Z" fill="#a0a0a0"/><text x="245.5" y="70.5" font-size="10" fill="#b3b3b3" font-weight="normal" font-style="normal" font-family="Liberation Sans">A</text><path d="M252.5 62 L254.3 60.2 L256 62" stroke="#b3b3b3" fill="none" stroke-width="1"/><text x="262.5" y="70.5" font-size="8.5" fill="#b3b3b3" font-weight="normal" font-style="normal" font-family="Liberation Sans">A</text><path d="M267.7 60.2 L271.3 60.2 L269.5 62.2 Z" fill="#b3b3b3"/><path d="M287 69 L292 62 L296 65 L291 71 Z" fill="#b3b3b3"/><path d="M284.5 67.5 L287 60.5 L289.5 67.5 M285.5 65 L288.5 65" stroke="#b3b3b3" fill="none" stroke-width="1"/><text x="126.5" y="91.6" font-size="9.5" fill="#b3b3b3" font-weight="bold" font-style="normal" font-family="Liberation Sans">B</text><text x="143.8" y="91.6" font-size="9.5" fill="#b3b3b3" font-weight="normal" font-style="italic" font-family="Liberation Serif">I</text><text x="159.8" y="91.6" font-size="9.5" fill="#b3b3b3" font-weight="bold" font-style="normal" font-family="Liberation Sans">U</text><line x1="160" y1="93.5" x2="166.5" y2="93.5" stroke="#b3b3b3"/><text x="175" y="91.6" font-size="10" fill="#b3b3b3" font-weight="bold" font-style="normal" font-family="Liberation Sans">x</text><text x="182" y="93.5" font-size="5" fill="#b3b3b3" font-weight="normal" font-style="normal" font-family="Liberation Sans">2</text><text x="192" y="91.6" font-size="10" fill="#b3b3b3" font-weight="bold" font-style="normal" font-family="Liberation Sans">x</text><text x="199" y="86" font-size="5" fill="#b3b3b3" font-weight="normal" font-style="normal" font-family="Liberation Sans">2</text><text x="206.5" y="91.6" font-size="10" fill="#b3b3b3" font-weight="normal" font-style="normal" font-family="Liberation Sans">Aa</text><path d="M222.2 88.0 L225.8 88.0 L224 90.0 Z" fill="#b3b3b3"/><text x="239" y="88.5" font-size="8" fill="#b3b3b3" font-weight="normal" font-style="normal" font-family="Liberation Sans">AV</text><path d="M239.5 92.5 L250 92.5 M241.5 91 L239.5 92.5 L241.5 94 M248 91 L250 92.5 L248 94" stroke="#b3b3b3" fill="none" stroke-width="0.9"/><path d="M254.2 88.0 L257.8 88.0 L256 90.0 Z" fill="#b3b3b3"/><text x="271.5" y="91.6" font-size="10" fill="#b3b3b3" font-weight="normal" font-style="normal" font-family="Liberation Sans">A</text><path d="M286.7 88.0 L290.3 88.0 L288.5 90.0 Z" fill="#b3b3b3"/><rect x="306.8" y="59.7" width="1.8" height="1.8" fill="#b3b3b3"/><rect x="306.8" y="64.2" width="1.8" height="1.8" fill="#b3b3b3"/><rect x="306.8" y="68.7" width="1.8" height="1.8" fill="#b3b3b3"/><line x1="310" y1="60.5" x2="317" y2="60.5" stroke="#b3b3b3" stroke-width="1"/><line x1="310" y1="65.5" x2="317" y2="65.5" stroke="#b3b3b3" stroke-width="1"/><line x1="310" y1="69.5" x2="317" y2="69.5" stroke="#b3b3b3" stroke-width="1"/><path d="M321.2 64.0 L324.8 64.0 L323 66.0 Z" fill="#b3b3b3"/><text x="331" y="63" font-size="3.5" fill="#b3b3b3" font-weight="normal" font-style="normal" font-family="Liberation Sans">1</text><text x="331" y="67.5" font-size="3.5" fill="#b3b3b3" font-weight="normal" font-style="normal" font-family="Liberation Sans">2</text><text x="331" y="72" font-size="3.5" fill="#b3b3b3" font-weight="normal" font-style="normal" font-family="Liberation Sans">3</text><line x1="335.5" y1="60.5" x2="343" y2="60.5" stroke="#b3b3b3" stroke-width="1"/><line x1="335.5" y1="65.5" x2="343" y2="65.5" stroke="#b3b3b3" stroke-width="1"/><line x1="335.5" y1="69.5" x2="343" y2="69.5" stroke="#b3b3b3" stroke-width="1"/><path d="M346.2 64.0 L349.8 64.0 L348 66.0 Z" fill="#b3b3b3"/><line x1="363" y1="60.5" x2="375" y2="60.5" stroke="#b3b3b3" stroke-width="1"/><line x1="363" y1="71.5" x2="375" y2="71.5" stroke="#b3b3b3" stroke-width="1"/><line x1="369" y1="63.5" x2="375" y2="63.5" stroke="#b3b3b3" stroke-width="1"/><line x1="369" y1="67.5" x2="375" y2="67.5" stroke="#b3b3b3" stroke-width="1"/><path d="M367.5 65.3 L363.5 65.3 M365 63.8 L363.5 65.3 L365 66.8" stroke="#b3b3b3" fill="none"/><line x1="379" y1="60.5" x2="392" y2="60.5" stroke="#b3b3b3" stroke-width="1"/><line x1="379" y1="71.5" x2="392" y2="71.5" stroke="#b3b3b3" stroke-width="1"/><line x1="385" y1="63.5" x2="392" y2="63.5" stroke="#b3b3b3" stroke-width="1"/><line x1="385" y1="67.5" x2="392" y2="67.5" stroke="#b3b3b3" stroke-width="1"/><path d="M379.5 65.3 L383.5 65.3 M382 63.8 L383.5 65.3 L382 66.8" stroke="#b3b3b3" fill="none"/><line x1="403" y1="61.5" x2="407.5" y2="61.5" stroke="#b3b3b3" stroke-width="1"/><line x1="403" y1="64.5" x2="407.5" y2="64.5" stroke="#b3b3b3" stroke-width="1"/><line x1="403" y1="67.5" x2="407.5" y2="67.5" stroke="#b3b3b3" stroke-width="1"/><line x1="403" y1="70.5" x2="407.5" y2="70.5" stroke="#b3b3b3" stroke-width="1"/><line x1="409" y1="61.5" x2="413.5" y2="61.5" stroke="#b3b3b3" stroke-width="1"/><line x1="409" y1="64.5" x2="413.5" y2="64.5" stroke="#b3b3b3" stroke-width="1"/><line x1="409" y1="67.5" x2="413.5" y2="67.5" stroke="#b3b3b3" stroke-width="1"/><line x1="409" y1="70.5" x2="413.5" y2="70.5" stroke="#b3b3b3" stroke-width="1"/><path d="M418.2 64.0 L421.8 64.0 L420 66.0 Z" fill="#b3b3b3"/><text x="435" y="70.5" font-size="12.5" fill="#6a6a6a" font-weight="bold" font-style="normal" font-family="Liberation Sans">¶</text><line x1="307" y1="85.5" x2="318" y2="85.5" stroke="#b3b3b3" stroke-width="1"/><line x1="307" y1="88.5" x2="318" y2="88.5" stroke="#b3b3b3" stroke-width="1"/><line x1="307" y1="91.5" x2="318" y2="91.5" stroke="#b3b3b3" stroke-width="1"/><line x1="307" y1="94.5" x2="318" y2="94.5" stroke="#b3b3b3" stroke-width="1"/><line x1="324" y1="85.5" x2="334" y2="85.5" stroke="#b3b3b3" stroke-width="1"/><line x1="324" y1="91.5" x2="334" y2="91.5" stroke="#b3b3b3" stroke-width="1"/><line x1="325.5" y1="88.5" x2="332.5" y2="88.5" stroke="#b3b3b3" stroke-width="1"/><line x1="325.5" y1="94.5" x2="332.5" y2="94.5" stroke="#b3b3b3" stroke-width="1"/><line x1="340" y1="85.5" x2="351" y2="85.5" stroke="#b3b3b3" stroke-width="1"/><line x1="340" y1="91.5" x2="351" y2="91.5" stroke="#b3b3b3" stroke-width="1"/><line x1="343" y1="88.5" x2="351" y2="88.5" stroke="#b3b3b3" stroke-width="1"/><line x1="343" y1="94.5" x2="351" y2="94.5" stroke="#b3b3b3" stroke-width="1"/><line x1="357" y1="85.5" x2="367" y2="85.5" stroke="#b3b3b3" stroke-width="1"/><line x1="357" y1="88.5" x2="367" y2="88.5" stroke="#b3b3b3" stroke-width="1"/><line x1="357" y1="91.5" x2="367" y2="91.5" stroke="#b3b3b3" stroke-width="1"/><line x1="357" y1="94.5" x2="367" y2="94.5" stroke="#b3b3b3" stroke-width="1"/><path d="M381 83.5 L381 95.5 M379 85.5 L381 83.5 L383 85.5 M379 93.5 L381 95.5 L383 93.5" stroke="#3d7fbf" fill="none" stroke-width="1.2"/><line x1="384" y1="85.5" x2="391" y2="85.5" stroke="#777" stroke-width="1.3"/><line x1="384" y1="88.5" x2="391" y2="88.5" stroke="#777" stroke-width="1.3"/><line x1="384" y1="92.5" x2="391" y2="92.5" stroke="#777" stroke-width="1.3"/><path d="M394.2 88.0 L397.8 88.0 L396 90.0 Z" fill="#555"/><line x1="404" y1="83.5" x2="409" y2="83.5" stroke="#b3b3b3" stroke-width="1"/><line x1="404" y1="86.5" x2="409" y2="86.5" stroke="#b3b3b3" stroke-width="1"/><line x1="404" y1="89.5" x2="409" y2="89.5" stroke="#b3b3b3" stroke-width="1"/><path d="M407 96 L416 87 L417 88 L411 95 Z" fill="#c8c8c8"/><path d="M419.2 88.0 L422.8 88.0 L421 90.0 Z" fill="#b3b3b3"/><path d="M463 70.5 L468.6 55.2 L474.6 70.5 M465.5 64.8 L472 64.8" stroke="#3d7fbf" stroke-width="2.6" fill="none"/><path d="M476 69.5 L482.8 60.2" stroke="#666" stroke-width="3"/><path d="M466 76.5 Q469 71 473 70.5 Q476 71 475.5 73 Q473 76 466 76.5 Z" fill="#3d7fbf"/><path d="M468.9 95.8 L473.1 95.8 L471 98.2 Z" fill="#555"/><rect x="501.7" y="55.9" width="20.5" height="18" rx="1" fill="#fff" stroke="#8a8a8a" stroke-width="1.2"/><path d="M505 65.5 L507.7 58.5 L510.4 65.5 M506 63 L509.4 63" stroke="#3d7fbf" stroke-width="1.1" fill="none"/><line x1="512" y1="59.5" x2="520" y2="59.5" stroke="#b8b8b8" stroke-width="0.9"/><line x1="512" y1="61.5" x2="520" y2="61.5" stroke="#b8b8b8" stroke-width="0.9"/><line x1="512" y1="63.5" x2="520" y2="63.5" stroke="#b8b8b8" stroke-width="0.9"/><line x1="512" y1="65.5" x2="520" y2="65.5" stroke="#b8b8b8" stroke-width="0.9"/><line x1="504" y1="68.5" x2="520" y2="68.5" stroke="#b8b8b8" stroke-width="0.9"/><line x1="504" y1="70.5" x2="520" y2="70.5" stroke="#b8b8b8" stroke-width="0.9"/><rect x="537.4" y="55.5" width="20.2" height="20.3" fill="#fff" stroke="#727272" stroke-width="1.1"/><circle cx="552.7" cy="60.2" r="2.2" fill="#f4a58a"/><path d="M539 74.5 L539 69.5 L544.5 65 L549.5 69 L549.5 74.5 Z" fill="#b5d8dc"/><circle cx="554" cy="72" r="5.3" fill="#fff" stroke="#3d7fbf" stroke-width="1"/><ellipse cx="554" cy="72" rx="2.3" ry="5.3" fill="none" stroke="#3d7fbf" stroke-width="0.9"/><path d="M548.8 70 L559.2 70 M548.8 74 L559.2 74" stroke="#3d7fbf" stroke-width="0.9"/><rect x="571.3" y="56.3" width="20.2" height="18" fill="#fff" stroke="#6a6a6a" stroke-width="1"/><rect x="571" y="56" width="21" height="2.6" fill="#555"/><path d="M578 58.5 L578 74 M584.8 58.5 L584.8 74 M571.5 62.5 L591.5 62.5 M571.5 66.8 L591.5 66.8 M571.5 71 L591.5 71" stroke="#9a9a9a" stroke-width="0.9"/><path d="M578.9 95.8 L583.1 95.8 L581 98.2 Z" fill="#555"/><circle cx="617" cy="61.5" r="6.4" fill="#fff" stroke="#6aa2cf" stroke-width="1.1"/><rect x="601.5" y="57.3" width="12.3" height="12.5" fill="#fff" stroke="#6aa2cf" stroke-width="1.1"/><path d="M612.5 63 L619 69.5 L612.5 76 L606 69.5 Z" fill="#fff" stroke="#6aa2cf" stroke-width="1.1"/><path d="M610.4 95.8 L614.6 95.8 L612.5 98.2 Z" fill="#555"/><path d="M643.8 55.8 L654.5 55.8 L658.3 59.6 L658.3 75.3 L643.8 75.3 Z" fill="#fbfbfb" stroke="#b3b3b3" stroke-width="1"/><line x1="646" y1="59.5" x2="656" y2="59.5" stroke=" #c4c4c4" stroke-width="0.8"/><line x1="646" y1="61.5" x2="656" y2="61.5" stroke=" #c4c4c4" stroke-width="0.8"/><line x1="646" y1="72.5" x2="656" y2="72.5" stroke=" #c4c4c4" stroke-width="0.8"/><line x1="646" y1="74.5" x2="656" y2="74.5" stroke=" #c4c4c4" stroke-width="0.8"/><path d="M647 69 A4 4 0 0 1 655 69" stroke="#b3b3b3" stroke-width="1.6" fill="none"/><path d="M658.7 97.0 L662.3 97.0 L660.5 99.0 Z" fill="#c4c4c4"/><rect x="670.2" y="54.5" width="7.3" height="7" fill="#cfcfcf"/><rect x="675.2" y="59.3" width="5.6" height="5.4" fill="#f1f1f1" stroke="#b3b3b3" stroke-width="1"/><rect x="670.2" y="71.5" width="7.3" height="7" fill="#cfcfcf"/><rect x="675.2" y="76.3" width="5.6" height="5.4" fill="#f1f1f1" stroke="#b3b3b3" stroke-width="1"/><path d="M746.2 59.0 L749.8 59.0 L748 61.0 Z" fill="#c4c4c4"/><path d="M751.2 76.0 L754.8 76.0 L753 78.0 Z" fill="#c4c4c4"/><rect x="671.5" y="88.5" width="1.6" height="10.5" fill="#666"/><rect x="673.5" y="91.5" width="6.8" height="3" fill="#f4a58a"/><path d="M680 97.5 L674 97.5 M676 95.8 L674 97.5 L676 99.2" stroke="#3d7fbf" stroke-width="1.1" fill="none"/><path d="M707.2 94.0 L710.8 94.0 L709 96.0 Z" fill="#555"/><rect x="762" y="55" width="10.5" height="9.5" fill="none" stroke="#b3b3b3" stroke-width="1" stroke-dasharray="1.5 1.5"/><rect x="765" y="57.5" width="5" height="4.5" fill="none" stroke="#b3b3b3" stroke-width="1"/><rect x="762" y="72" width="10.5" height="9.5" fill="none" stroke="#b3b3b3" stroke-width="1" stroke-dasharray="1.5 1.5"/><rect x="764" y="74" width="4" height="4" fill="none" stroke="#b3b3b3" stroke-width="0.9"/><path d="M761.5 99 L766.5 92 L766.5 99 Z" fill="none" stroke="#cfcfcf" stroke-width="1"/><path d="M768 99 L768 91 L773 99 Z" fill="#b3b3b3"/><path d="M804.2 94.0 L807.8 94.0 L806 96.0 Z" fill="#c4c4c4"/><circle cx="832.7" cy="58.3" r="3.3" fill="none" stroke="#3d7fbf" stroke-width="1.6"/><path d="M830.2 61 L826.5 64.5" stroke="#3d7fbf" stroke-width="2"/><path d="M864.2 59.0 L867.8 59.0 L866 61.0 Z" fill="#555"/><text x="825.5" y="75.5" font-size="7.5" fill="#555" font-weight="normal" font-style="normal" font-family="Liberation Sans">ab</text><text x="829" y="81.5" font-size="7.5" fill="#555" font-weight="normal" font-style="normal" font-family="Liberation Sans">ac</text><path d="M825.5 79 L827.5 80.5" stroke="#3d7fbf" stroke-width="1.2"/><path d="M828.5 88.5 L828.5 98 L831 95.5 L833 99.5 L834.5 98.7 L832.5 95 L835.5 95 Z" fill="#fff" stroke="#666" stroke-width="1"/><path d="M865.2 93.5 L868.8 93.5 L867 95.5 Z" fill="#555"/><path d="M1432 114 L1435 111 L1438 114" stroke="#555" stroke-width="1.2" fill="none"/><path d="M17 8 L27 8 L27 18 L17 18 Z" fill="none" stroke="#fff" stroke-width="1.4"/><rect x="19" y="8" width="6" height="3.6" fill="none" stroke="#fff" stroke-width="1.2"/><rect x="19.3" y="14.2" width="5.4" height="3.8" fill="#fff"/><path d="M40 11.5 L44 8 M40 11.5 L44 15 M40.5 11.5 L46 11.5 Q49 11.5 49 14.5 Q49 17 46 17.5" fill="none" stroke="#5fa69d" stroke-width="1.2"/><path d="M54 11.2 L57 11.2 L55.5 13 Z" fill="#5fa69d"/><path d="M75 11.5 L71 8 M75 11.5 L71 15 M74.5 11.5 L69 11.5 Q66 11.5 66 14.5 Q66 17 69 17.5" fill="none" stroke="#5fa69d" stroke-width="1.2"/><path d="M80.5 11.2 L83.5 11.2 L82 13 Z" fill="#5fa69d"/><rect x="94" y="10" width="4" height="1" fill="#fff"/><path d="M94 12.5 L98 12.5 L96 14.5 Z" fill="#fff"/><line x1="1355" y1="11.5" x2="1363" y2="11.5" stroke="#fff" stroke-width="1"/><rect x="1390.5" y="9.5" width="6" height="6" fill="none" stroke="#fff" stroke-width="1"/><path d="M1392.5 9.5 L1392.5 7.5 L1398.5 7.5 L1398.5 13.5 L1396.5 13.5" fill="none" stroke="#fff" stroke-width="1"/><path d="M1424.5 7.5 L1432.5 15.5 M1432.5 7.5 L1424.5 15.5" stroke="#fff" stroke-width="1"/><path d="M884.5 5 L884.5 19 L887.8 15.8 L890.2 21 L892.2 20.1 L889.9 15 L894 15 Z" fill="#fff" stroke="#222" stroke-width="0.9"/><path d="M96 131.5 L93.2 134.3 L96 137.1" fill="none" stroke="#444" stroke-width="1.4"/><path d="M10.8 152.6 L10.8 157.2 L6.3 157.2 Z" fill="#444"/><rect x="1433.5" y="120.5" width="11" height="11" fill="#fff" stroke="#c8c8c8"/><path d="M1436.5 127.5 L1439 124.8 L1441.5 127.5 Z" fill="#555"/><rect x="1433.5" y="268.5" width="11" height="302" fill="#fff" stroke="#c8c8c8"/><rect x="1433.5" y="715.5" width="11" height="11" fill="#fff" stroke="#c8c8c8"/><path d="M1436.5 719.5 L1441.5 719.5 L1439 722.2 Z" fill="#555"/><rect x="1433" y="727" width="12" height="26" fill="#f0f0f0"/><rect x="1434" y="728" width="11" height="11" fill="#ebebeb"/><rect x="1434" y="741" width="11" height="11" fill="#ebebeb"/><path d="M1436.5 734.5 L1439.3 731.5 L1442 734.5 Z M1436.5 737.5 L1439.3 734.5 L1442 737.5 Z" fill="#3a3a3a"/><path d="M1436.5 743.5 L1439.3 746.5 L1442 743.5 Z M1436.5 746.5 L1439.3 749.5 L1442 746.5 Z" fill="#3a3a3a"/><rect x="107.5" y="754.5" width="11" height="11" fill="#fff" stroke="#c8c8c8"/><path d="M114.5 757.5 L111.8 760 L114.5 762.5 Z" fill="#555"/><rect x="278.5" y="754.5" width="968" height="11" fill="#fff" stroke="#c8c8c8"/><rect x="1420.5" y="754.5" width="11" height="11" fill="#fff" stroke="#c8c8c8"/><path d="M1424.5 757.5 L1427.2 760 L1424.5 762.5 Z" fill="#555"/><rect x="1432" y="753" width="13" height="13" fill="#f0f0f0"/><path d="M68.5 768 L68.5 779 L71 776.6 L72.8 780.5 L74.3 779.8 L72.6 776 L75.8 776 Z" fill="#555"/><rect x="146.5" y="770.5" width="10" height="7.5" fill="#fff" stroke="#6a6a6a"/><text x="148" y="776.5" font-size="4.5" fill="#555" font-family="Liberation Sans">XY</text><rect x="1240" y="767" width="29" height="15" fill="#c8c8c8"/><rect x="1249.5" y="769.5" width="10" height="9" fill="#a6a6a6" stroke="#6f6f6f"/><rect x="1277.5" y="769.5" width="10" height="9" fill="#f1f1f1" stroke="#7a7a7a"/><path d="M1280.5 771 L1280.5 777 M1284.5 771 L1284.5 777" stroke="#7a7a7a"/><rect x="1301" y="773.5" width="4.5" height="1.6" fill="#555"/><rect x="1309" y="774" width="75" height="1" fill="#b5b5b5"/><rect x="1335" y="770" width="3.3" height="8.5" fill="#555"/><rect x="1346.3" y="772" width="0.8" height="4.5" fill="#999"/><path d="M1389 774.5 L1394.5 774.5 M1391.75 771.8 L1391.75 777.2" stroke="#555" stroke-width="1.5"/><rect x="1430.5" y="770.5" width="10" height="9" fill="none" stroke="#6a6a6a"/><path d="M1431.5 771.5 L1434 774 M1439.5 771.5 L1437 774 M1431.5 778.5 L1434 776 M1439.5 778.5 L1437 776" stroke="#6a6a6a"/></svg>
</body></html>
